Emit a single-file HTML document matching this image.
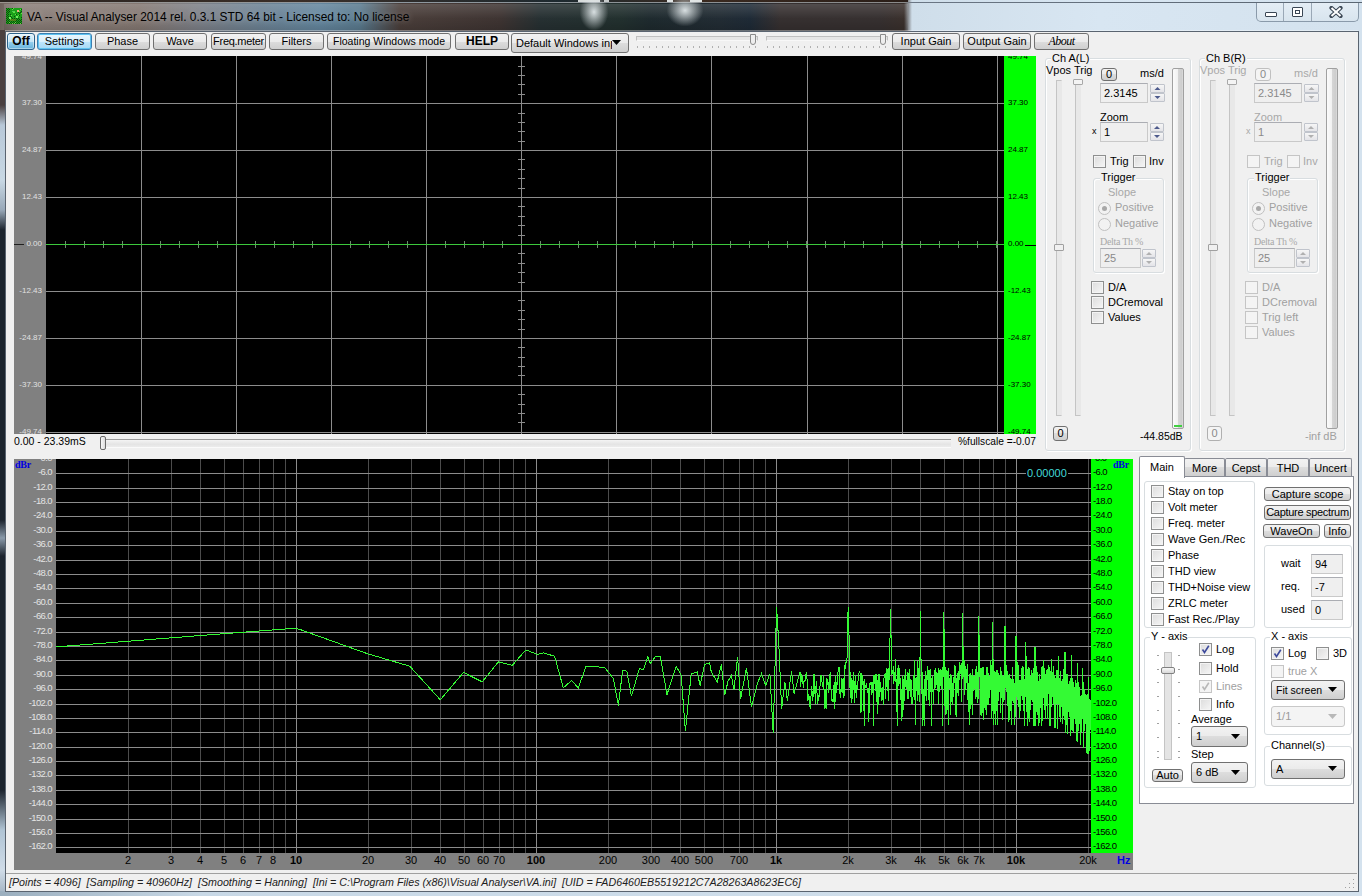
<!DOCTYPE html><html><head><meta charset="utf-8"><style>
*{margin:0;padding:0;box-sizing:content-box}
html,body{width:1362px;height:896px;overflow:hidden;background:#f0f0f0;font-family:"Liberation Sans", sans-serif;font-size:11px;color:#000}
.t{position:absolute;white-space:nowrap;line-height:12px}
.btn{position:absolute;border:1px solid #707070;border-radius:3px;background:linear-gradient(#f2f2f2 0%,#ebebeb 50%,#dddddd 50%,#cfcfcf 100%);text-align:center;white-space:nowrap;overflow:hidden}
.btnd{position:absolute;border:1px solid #adb2b5;border-radius:3px;background:#f4f4f4;text-align:center;white-space:nowrap;overflow:hidden;color:#8a8a8a}
.grp{position:absolute;border:1px solid #d8dde0;border-radius:3px;box-shadow:inset 1px 1px 0 #fff,1px 1px 0 #fff}
.glab{background:#f0f0f0;padding:0 1px}
.cb{position:absolute;width:11px;height:11px;border:1px solid #8e8f8f;background:linear-gradient(135deg,#dcdcdc,#f6f6f6);box-shadow:inset 0 0 0 1px #f4f4f4}
.cb.dis{border-color:#c5c5c5;background:#f4f4f4;box-shadow:none}
.edit{position:absolute;border:1px solid #c9c9c9;border-top-color:#abadb3;background:#efefef;padding-left:3px;box-sizing:border-box;white-space:nowrap}
.spin{position:absolute;border:1px solid #c0c4cc;background:linear-gradient(#f6f6f6,#e4e4e8);border-radius:1px}
.combo{position:absolute;border:1px solid #707070;border-radius:3px;background:linear-gradient(#f2f2f2 0%,#ebebeb 50%,#dddddd 50%,#cfcfcf 100%);padding-left:4px;box-sizing:border-box;white-space:nowrap}
.combo.dis{border-color:#c8c8c8;background:#f4f4f4}
.rad{position:absolute;width:11px;height:11px;border:1px solid #c0c0c0;border-radius:50%;background:#f2f2f2}
.lbl{position:absolute;white-space:nowrap;font-size:8px;line-height:9px;text-align:right}
</style></head><body><div style="position:absolute;left:0;top:0;width:1362px;height:31px;background:linear-gradient(90deg,#6e625c 0px,#8a7e78 20px,#847872 140px,#7c8088 200px,#6c8294 260px,#64869e 320px,#5a7a8e 360px,#4a3e3a 400px,#3e3432 500px,#263032 540px,#22302e 620px,#1e2a2e 650px,#222c34 720px,#1e2a36 750px,#363030 780px,#363030 880px,#3a302c 904px,#cfdeea 912px,#d8e6f2 1100px,#d4e2ee 1362px)"></div><div style="position:absolute;left:0;top:0;width:908px;height:2px;background:linear-gradient(90deg,#2a2420,#3a2e28 300px,#1e2a30 560px,#3a2a20 700px,#2a1e18 905px)"></div><div style="position:absolute;left:578px;top:0;width:22px;height:2px;background:#d8dcdc"></div><div style="position:absolute;left:604px;top:0;width:5px;height:2px;background:#c8cccc"></div><div style="position:absolute;left:667px;top:0;width:6px;height:2px;background:#e0e4e4"></div><div style="position:absolute;left:690px;top:0;width:12px;height:2px;background:#e0e4e4"></div><div style="position:absolute;left:0;top:2px;width:1362px;height:1px;background:linear-gradient(90deg,#9a948e,#8e98a0 400px,#8a8a8a 905px,#6a7684 912px,#5a6672)"></div><div style="position:absolute;left:4px;top:4px;width:904px;height:27px;background:linear-gradient(rgba(255,255,255,0.14),rgba(255,255,255,0.0) 55%,rgba(0,0,0,0.14))"></div><div style="position:absolute;left:574px;top:0px;width:40px;height:30px;background:radial-gradient(ellipse 36% 62% at 50% 40%,rgba(225,232,234,0.95),rgba(200,210,210,0) 100%)"></div><div style="position:absolute;left:662px;top:0px;width:46px;height:26px;background:radial-gradient(ellipse 40% 62% at 50% 40%,rgba(225,232,234,0.95),rgba(200,210,210,0) 100%)"></div><div style="position:absolute;left:0;top:30px;width:5px;height:866px;background:linear-gradient(#4a4040 0px,#4a4040 75px,#b8c8d8 95px,#c8d8e4 150px,#98a8b8 180px,#1c242e 200px,#1c242e 490px,#8a9aaa 508px,#1c242e 526px,#1c242e 760px,#b0c4d4 800px,#d0dce8 840px,#a0b0c0 866px)"></div><div style="position:absolute;left:1358px;top:30px;width:4px;height:866px;background:#d4e2ee"></div><div style="position:absolute;left:0;top:891px;width:1362px;height:5px;background:linear-gradient(90deg,#9aaebe,#c8d8e6 200px,#d4e2ee)"></div><div style="position:absolute;left:5px;top:31px;width:1352px;height:859px;border:1px solid #5a6470;background:#f0f0f0"></div><div style="position:absolute;left:5px;top:30px;width:1353px;height:1px;background:rgba(255,255,255,0.35)"></div><svg style="position:absolute;left:6px;top:8px" width="16" height="16" shape-rendering="crispEdges"><rect width="16" height="16" fill="#1aa01a"/><rect x="0" y="0" width="1" height="1" fill="#0a4a0a"/><rect x="2" y="0" width="1" height="1" fill="#0a4a0a"/><rect x="6" y="0" width="1" height="1" fill="#0a4a0a"/><rect x="7" y="0" width="1" height="1" fill="#60e040"/><rect x="1" y="1" width="1" height="1" fill="#0a4a0a"/><rect x="3" y="1" width="1" height="1" fill="#0a4a0a"/><rect x="6" y="1" width="1" height="1" fill="#60e040"/><rect x="14" y="1" width="1" height="1" fill="#60e040"/><rect x="15" y="1" width="1" height="1" fill="#0a4a0a"/><rect x="0" y="2" width="1" height="1" fill="#0a4a0a"/><rect x="2" y="2" width="1" height="1" fill="#0a4a0a"/><rect x="1" y="3" width="1" height="1" fill="#0a4a0a"/><rect x="3" y="3" width="1" height="1" fill="#0a4a0a"/><rect x="6" y="3" width="1" height="1" fill="#60e040"/><rect x="8" y="3" width="1" height="1" fill="#60e040"/><rect x="11" y="3" width="1" height="1" fill="#0a4a0a"/><rect x="13" y="3" width="1" height="1" fill="#60e040"/><rect x="15" y="3" width="1" height="1" fill="#0a4a0a"/><rect x="0" y="4" width="1" height="1" fill="#0a4a0a"/><rect x="2" y="4" width="1" height="1" fill="#0a4a0a"/><rect x="7" y="4" width="1" height="1" fill="#60e040"/><rect x="8" y="4" width="1" height="1" fill="#60e040"/><rect x="12" y="4" width="1" height="1" fill="#0a4a0a"/><rect x="14" y="4" width="1" height="1" fill="#0a4a0a"/><rect x="1" y="5" width="1" height="1" fill="#0a4a0a"/><rect x="13" y="5" width="1" height="1" fill="#0a4a0a"/><rect x="15" y="5" width="1" height="1" fill="#60e040"/><rect x="0" y="6" width="1" height="1" fill="#0a4a0a"/><rect x="2" y="6" width="1" height="1" fill="#0a4a0a"/><rect x="4" y="6" width="1" height="1" fill="#0a4a0a"/><rect x="9" y="6" width="1" height="1" fill="#60e040"/><rect x="10" y="6" width="1" height="1" fill="#0a4a0a"/><rect x="1" y="7" width="1" height="1" fill="#0a4a0a"/><rect x="5" y="7" width="1" height="1" fill="#60e040"/><rect x="12" y="7" width="1" height="1" fill="#60e040"/><rect x="13" y="7" width="1" height="1" fill="#0a4a0a"/><rect x="0" y="8" width="1" height="1" fill="#0a4a0a"/><rect x="2" y="8" width="1" height="1" fill="#0a4a0a"/><rect x="4" y="8" width="1" height="1" fill="#0a4a0a"/><rect x="8" y="8" width="1" height="1" fill="#0a4a0a"/><rect x="10" y="8" width="1" height="1" fill="#0a4a0a"/><rect x="1" y="9" width="1" height="1" fill="#0a4a0a"/><rect x="3" y="9" width="1" height="1" fill="#0a4a0a"/><rect x="5" y="9" width="1" height="1" fill="#0a4a0a"/><rect x="10" y="9" width="1" height="1" fill="#60e040"/><rect x="15" y="9" width="1" height="1" fill="#0a4a0a"/><rect x="0" y="10" width="1" height="1" fill="#0a4a0a"/><rect x="2" y="10" width="1" height="1" fill="#0a4a0a"/><rect x="6" y="10" width="1" height="1" fill="#0a4a0a"/><rect x="8" y="10" width="1" height="1" fill="#0a4a0a"/><rect x="10" y="10" width="1" height="1" fill="#0a4a0a"/><rect x="12" y="10" width="1" height="1" fill="#0a4a0a"/><rect x="1" y="11" width="1" height="1" fill="#0a4a0a"/><rect x="3" y="11" width="1" height="1" fill="#0a4a0a"/><rect x="4" y="11" width="1" height="1" fill="#60e040"/><rect x="5" y="11" width="1" height="1" fill="#0a4a0a"/><rect x="7" y="11" width="1" height="1" fill="#0a4a0a"/><rect x="9" y="11" width="1" height="1" fill="#0a4a0a"/><rect x="11" y="11" width="1" height="1" fill="#0a4a0a"/><rect x="13" y="11" width="1" height="1" fill="#0a4a0a"/><rect x="15" y="11" width="1" height="1" fill="#0a4a0a"/><rect x="0" y="12" width="1" height="1" fill="#0a4a0a"/><rect x="2" y="12" width="1" height="1" fill="#0a4a0a"/><rect x="4" y="12" width="1" height="1" fill="#0a4a0a"/><rect x="6" y="12" width="1" height="1" fill="#0a4a0a"/><rect x="8" y="12" width="1" height="1" fill="#0a4a0a"/><rect x="10" y="12" width="1" height="1" fill="#0a4a0a"/><rect x="12" y="12" width="1" height="1" fill="#0a4a0a"/><rect x="14" y="12" width="1" height="1" fill="#0a4a0a"/><rect x="1" y="13" width="1" height="1" fill="#0a4a0a"/><rect x="3" y="13" width="1" height="1" fill="#0a4a0a"/><rect x="5" y="13" width="1" height="1" fill="#0a4a0a"/><rect x="7" y="13" width="1" height="1" fill="#0a4a0a"/><rect x="9" y="13" width="1" height="1" fill="#0a4a0a"/><rect x="11" y="13" width="1" height="1" fill="#0a4a0a"/><rect x="13" y="13" width="1" height="1" fill="#0a4a0a"/><rect x="15" y="13" width="1" height="1" fill="#0a4a0a"/><rect x="0" y="14" width="1" height="1" fill="#0a4a0a"/><rect x="2" y="14" width="1" height="1" fill="#0a4a0a"/><rect x="3" y="14" width="1" height="1" fill="#60e040"/><rect x="4" y="14" width="1" height="1" fill="#0a4a0a"/><rect x="6" y="14" width="1" height="1" fill="#0a4a0a"/><rect x="8" y="14" width="1" height="1" fill="#0a4a0a"/><rect x="9" y="14" width="1" height="1" fill="#60e040"/><rect x="10" y="14" width="1" height="1" fill="#0a4a0a"/><rect x="12" y="14" width="1" height="1" fill="#0a4a0a"/><rect x="14" y="14" width="1" height="1" fill="#0a4a0a"/><rect x="1" y="15" width="1" height="1" fill="#0a4a0a"/><rect x="3" y="15" width="1" height="1" fill="#0a4a0a"/><rect x="5" y="15" width="1" height="1" fill="#0a4a0a"/><rect x="6" y="15" width="1" height="1" fill="#60e040"/><rect x="7" y="15" width="1" height="1" fill="#0a4a0a"/><rect x="8" y="15" width="1" height="1" fill="#60e040"/><rect x="9" y="15" width="1" height="1" fill="#0a4a0a"/><rect x="11" y="15" width="1" height="1" fill="#0a4a0a"/><rect x="13" y="15" width="1" height="1" fill="#0a4a0a"/><rect x="14" y="15" width="1" height="1" fill="#60e040"/><rect x="15" y="15" width="1" height="1" fill="#0a4a0a"/><rect x="11" y="2" width="2" height="2" fill="#f0b080"/><rect x="6" y="3" width="3" height="1" fill="#50d050"/><rect x="3" y="9" width="2" height="2" fill="#70f060"/><rect x="10" y="8" width="2" height="2" fill="#70f060"/><rect x="4" y="11" width="6" height="2" fill="#7a8a20" opacity=".6"/></svg><div class="t" style="left:27px;top:10px;font-size:11.9px;line-height:14px;color:#000;text-shadow:0 0 6px rgba(255,255,255,.35)">VA -- Visual Analyser 2014 rel. 0.3.1 STD 64 bit - Licensed to: No license</div><div style="position:absolute;left:1256px;top:3px;width:101px;height:18px;border:1px solid #8a9aaa;border-top:none;border-radius:0 0 5px 5px;background:linear-gradient(#e4edf5,#d8e4ee)"></div><div style="position:absolute;left:1283px;top:3px;width:1px;height:18px;background:#9aa8b6"></div><div style="position:absolute;left:1311px;top:3px;width:1px;height:18px;background:#9aa8b6"></div><div style="position:absolute;left:1265px;top:12px;width:10px;height:3px;border:1px solid #3a4654;background:#fff;border-radius:1px"></div><div style="position:absolute;left:1292px;top:7px;width:9px;height:8px;border:1px solid #3a4654;background:#fff;border-radius:1px"><div style="position:absolute;left:2px;top:2px;width:3px;height:2px;border:1px solid #3a4654"></div></div><svg style="position:absolute;left:1329px;top:6px" width="14" height="12"><path d="M2.5 2 L11.5 10 M11.5 2 L2.5 10" stroke="#3a4654" stroke-width="4.2" stroke-linecap="round"/><path d="M2.5 2 L11.5 10 M11.5 2 L2.5 10" stroke="#fff" stroke-width="2"/></svg><div class="btn" style="left:7px;top:33px;width:26px;height:15px;line-height:15px;border-color:#2c628b;background:linear-gradient(#e5f4fc 0%,#c4e5f6 50%,#98d1ef 50%,#68b3db 100%);box-shadow:inset 0 0 0 1px rgba(255,255,255,.4)"><span style="font-weight:bold;font-size:12px">Off</span></div><div class="btn" style="left:37px;top:33px;width:53px;height:15px;line-height:15px;border-color:#3c7fb1;background:linear-gradient(#eaf6fd 0%,#d9f0fc 50%,#bee6fd 50%,#a7d9f5 100%);box-shadow:inset 0 0 0 1px #5ec2f0"><span>Settings</span></div><div class="btn" style="left:95px;top:33px;width:53px;height:15px;line-height:15px;"><span style="">Phase</span></div><div class="btn" style="left:153px;top:33px;width:52px;height:15px;line-height:15px;"><span style="">Wave</span></div><div class="btn" style="left:211px;top:33px;width:53px;height:15px;line-height:15px;"><span style="letter-spacing:-0.3px">Freq.meter</span></div><div class="btn" style="left:269px;top:33px;width:53px;height:15px;line-height:15px;"><span style="">Filters</span></div><div class="btn" style="left:327px;top:33px;width:122px;height:15px;line-height:15px;"><span style="font-size:10.5px">Floating Windows mode</span></div><div class="btn" style="left:455px;top:33px;width:52px;height:15px;line-height:15px;"><span style="font-weight:bold;font-size:12px">HELP</span></div><div class="combo" style="left:511px;top:33px;width:118px;height:20px;line-height:18px;color:#000"><div style="position:absolute;left:4px;top:0;width:96px;overflow:hidden;white-space:nowrap">Default Windows inp</div><svg width="9" height="5" style="position:absolute;right:7px;top:6px"><path d="M0 0 L9 0 L4.5 5Z" fill="#000"/></svg></div><div style="position:absolute;left:636px;top:36px;width:120px;height:3px;border:1px solid #c0c0c0;border-bottom-color:#f8f8f8;background:#e6e6e6"></div><div style="position:absolute;left:637px;top:46px;width:120px;height:3px"><div style="position:absolute;left:0px;top:0;width:1px;height:2px;background:#b0b0b0"></div><div style="position:absolute;left:6px;top:0;width:1px;height:2px;background:#b0b0b0"></div><div style="position:absolute;left:12px;top:0;width:1px;height:2px;background:#b0b0b0"></div><div style="position:absolute;left:19px;top:0;width:1px;height:2px;background:#b0b0b0"></div><div style="position:absolute;left:25px;top:0;width:1px;height:2px;background:#b0b0b0"></div><div style="position:absolute;left:31px;top:0;width:1px;height:2px;background:#b0b0b0"></div><div style="position:absolute;left:37px;top:0;width:1px;height:2px;background:#b0b0b0"></div><div style="position:absolute;left:43px;top:0;width:1px;height:2px;background:#b0b0b0"></div><div style="position:absolute;left:50px;top:0;width:1px;height:2px;background:#b0b0b0"></div><div style="position:absolute;left:56px;top:0;width:1px;height:2px;background:#b0b0b0"></div><div style="position:absolute;left:62px;top:0;width:1px;height:2px;background:#b0b0b0"></div><div style="position:absolute;left:68px;top:0;width:1px;height:2px;background:#b0b0b0"></div><div style="position:absolute;left:75px;top:0;width:1px;height:2px;background:#b0b0b0"></div><div style="position:absolute;left:81px;top:0;width:1px;height:2px;background:#b0b0b0"></div><div style="position:absolute;left:87px;top:0;width:1px;height:2px;background:#b0b0b0"></div><div style="position:absolute;left:93px;top:0;width:1px;height:2px;background:#b0b0b0"></div><div style="position:absolute;left:99px;top:0;width:1px;height:2px;background:#b0b0b0"></div><div style="position:absolute;left:106px;top:0;width:1px;height:2px;background:#b0b0b0"></div><div style="position:absolute;left:112px;top:0;width:1px;height:2px;background:#b0b0b0"></div><div style="position:absolute;left:118px;top:0;width:1px;height:2px;background:#b0b0b0"></div></div><div style="position:absolute;left:750px;top:34px;width:4px;height:9px;border:1px solid #8a8a8a;border-radius:0 0 3px 3px;background:#eee"></div><div style="position:absolute;left:766px;top:36px;width:120px;height:3px;border:1px solid #c0c0c0;border-bottom-color:#f8f8f8;background:#e6e6e6"></div><div style="position:absolute;left:767px;top:46px;width:120px;height:3px"><div style="position:absolute;left:0px;top:0;width:1px;height:2px;background:#b0b0b0"></div><div style="position:absolute;left:6px;top:0;width:1px;height:2px;background:#b0b0b0"></div><div style="position:absolute;left:12px;top:0;width:1px;height:2px;background:#b0b0b0"></div><div style="position:absolute;left:19px;top:0;width:1px;height:2px;background:#b0b0b0"></div><div style="position:absolute;left:25px;top:0;width:1px;height:2px;background:#b0b0b0"></div><div style="position:absolute;left:31px;top:0;width:1px;height:2px;background:#b0b0b0"></div><div style="position:absolute;left:37px;top:0;width:1px;height:2px;background:#b0b0b0"></div><div style="position:absolute;left:43px;top:0;width:1px;height:2px;background:#b0b0b0"></div><div style="position:absolute;left:50px;top:0;width:1px;height:2px;background:#b0b0b0"></div><div style="position:absolute;left:56px;top:0;width:1px;height:2px;background:#b0b0b0"></div><div style="position:absolute;left:62px;top:0;width:1px;height:2px;background:#b0b0b0"></div><div style="position:absolute;left:68px;top:0;width:1px;height:2px;background:#b0b0b0"></div><div style="position:absolute;left:75px;top:0;width:1px;height:2px;background:#b0b0b0"></div><div style="position:absolute;left:81px;top:0;width:1px;height:2px;background:#b0b0b0"></div><div style="position:absolute;left:87px;top:0;width:1px;height:2px;background:#b0b0b0"></div><div style="position:absolute;left:93px;top:0;width:1px;height:2px;background:#b0b0b0"></div><div style="position:absolute;left:99px;top:0;width:1px;height:2px;background:#b0b0b0"></div><div style="position:absolute;left:106px;top:0;width:1px;height:2px;background:#b0b0b0"></div><div style="position:absolute;left:112px;top:0;width:1px;height:2px;background:#b0b0b0"></div><div style="position:absolute;left:118px;top:0;width:1px;height:2px;background:#b0b0b0"></div></div><div style="position:absolute;left:880px;top:34px;width:4px;height:9px;border:1px solid #8a8a8a;border-radius:0 0 3px 3px;background:#eee"></div><div class="btn" style="left:892px;top:33px;width:66px;height:15px;line-height:15px;"><span style="">Input Gain</span></div><div class="btn" style="left:963px;top:33px;width:66px;height:15px;line-height:15px;"><span style="">Output Gain</span></div><div class="btn" style="left:1034px;top:33px;width:53px;height:15px;line-height:15px;"><span style=""><i style="font-family:&quot;Liberation Serif&quot;,serif;font-size:12px;letter-spacing:-0.5px">About</i></span></div><div style="position:absolute;left:14px;top:56px;width:32px;height:378px;background:#808080"></div><div style="position:absolute;left:46px;top:56px;width:958px;height:378px;background:#000"></div><div style="position:absolute;left:1004px;top:56px;width:32px;height:378px;background:#00ff00"></div><svg style="position:absolute;left:46px;top:56px" width="958" height="378" shape-rendering="crispEdges"><rect x="95" y="0" width="1" height="378" fill="#8c8c8c"/><rect x="190" y="0" width="1" height="378" fill="#8c8c8c"/><rect x="285" y="0" width="1" height="378" fill="#8c8c8c"/><rect x="380" y="0" width="1" height="378" fill="#8c8c8c"/><rect x="475" y="0" width="1" height="378" fill="#8c8c8c"/><rect x="570" y="0" width="1" height="378" fill="#8c8c8c"/><rect x="665" y="0" width="1" height="378" fill="#8c8c8c"/><rect x="761" y="0" width="1" height="378" fill="#8c8c8c"/><rect x="856" y="0" width="1" height="378" fill="#8c8c8c"/><rect x="951" y="0" width="1" height="378" fill="#8c8c8c"/><rect x="0" y="47" width="958" height="1" fill="#8c8c8c"/><rect x="0" y="94" width="958" height="1" fill="#8c8c8c"/><rect x="0" y="141" width="958" height="1" fill="#8c8c8c"/><rect x="0" y="188" width="958" height="1" fill="#8c8c8c"/><rect x="0" y="235" width="958" height="1" fill="#8c8c8c"/><rect x="0" y="282" width="958" height="1" fill="#8c8c8c"/><rect x="0" y="329" width="958" height="1" fill="#8c8c8c"/><rect x="0" y="376" width="958" height="1" fill="#8c8c8c"/><rect x="472" y="10" width="7" height="1" fill="#8c8c8c"/><rect x="472" y="19" width="7" height="1" fill="#8c8c8c"/><rect x="472" y="28" width="7" height="1" fill="#8c8c8c"/><rect x="472" y="38" width="7" height="1" fill="#8c8c8c"/><rect x="472" y="47" width="7" height="1" fill="#8c8c8c"/><rect x="472" y="57" width="7" height="1" fill="#8c8c8c"/><rect x="472" y="66" width="7" height="1" fill="#8c8c8c"/><rect x="472" y="75" width="7" height="1" fill="#8c8c8c"/><rect x="472" y="85" width="7" height="1" fill="#8c8c8c"/><rect x="472" y="94" width="7" height="1" fill="#8c8c8c"/><rect x="472" y="103" width="7" height="1" fill="#8c8c8c"/><rect x="472" y="113" width="7" height="1" fill="#8c8c8c"/><rect x="472" y="122" width="7" height="1" fill="#8c8c8c"/><rect x="472" y="132" width="7" height="1" fill="#8c8c8c"/><rect x="472" y="141" width="7" height="1" fill="#8c8c8c"/><rect x="472" y="150" width="7" height="1" fill="#8c8c8c"/><rect x="472" y="160" width="7" height="1" fill="#8c8c8c"/><rect x="472" y="169" width="7" height="1" fill="#8c8c8c"/><rect x="472" y="179" width="7" height="1" fill="#8c8c8c"/><rect x="472" y="197" width="7" height="1" fill="#8c8c8c"/><rect x="472" y="207" width="7" height="1" fill="#8c8c8c"/><rect x="472" y="216" width="7" height="1" fill="#8c8c8c"/><rect x="472" y="226" width="7" height="1" fill="#8c8c8c"/><rect x="472" y="235" width="7" height="1" fill="#8c8c8c"/><rect x="472" y="244" width="7" height="1" fill="#8c8c8c"/><rect x="472" y="254" width="7" height="1" fill="#8c8c8c"/><rect x="472" y="263" width="7" height="1" fill="#8c8c8c"/><rect x="472" y="273" width="7" height="1" fill="#8c8c8c"/><rect x="472" y="282" width="7" height="1" fill="#8c8c8c"/><rect x="472" y="291" width="7" height="1" fill="#8c8c8c"/><rect x="472" y="301" width="7" height="1" fill="#8c8c8c"/><rect x="472" y="310" width="7" height="1" fill="#8c8c8c"/><rect x="472" y="319" width="7" height="1" fill="#8c8c8c"/><rect x="472" y="329" width="7" height="1" fill="#8c8c8c"/><rect x="472" y="338" width="7" height="1" fill="#8c8c8c"/><rect x="472" y="348" width="7" height="1" fill="#8c8c8c"/><rect x="472" y="357" width="7" height="1" fill="#8c8c8c"/><rect x="472" y="366" width="7" height="1" fill="#8c8c8c"/><rect x="472" y="376" width="7" height="1" fill="#8c8c8c"/><rect x="19" y="185" width="1" height="7" fill="#6c8c6c"/><rect x="38" y="185" width="1" height="7" fill="#6c8c6c"/><rect x="57" y="185" width="1" height="7" fill="#6c8c6c"/><rect x="76" y="185" width="1" height="7" fill="#6c8c6c"/><rect x="95" y="185" width="1" height="7" fill="#6c8c6c"/><rect x="114" y="185" width="1" height="7" fill="#6c8c6c"/><rect x="133" y="185" width="1" height="7" fill="#6c8c6c"/><rect x="152" y="185" width="1" height="7" fill="#6c8c6c"/><rect x="171" y="185" width="1" height="7" fill="#6c8c6c"/><rect x="190" y="185" width="1" height="7" fill="#6c8c6c"/><rect x="209" y="185" width="1" height="7" fill="#6c8c6c"/><rect x="228" y="185" width="1" height="7" fill="#6c8c6c"/><rect x="247" y="185" width="1" height="7" fill="#6c8c6c"/><rect x="266" y="185" width="1" height="7" fill="#6c8c6c"/><rect x="285" y="185" width="1" height="7" fill="#6c8c6c"/><rect x="304" y="185" width="1" height="7" fill="#6c8c6c"/><rect x="323" y="185" width="1" height="7" fill="#6c8c6c"/><rect x="342" y="185" width="1" height="7" fill="#6c8c6c"/><rect x="361" y="185" width="1" height="7" fill="#6c8c6c"/><rect x="380" y="185" width="1" height="7" fill="#6c8c6c"/><rect x="399" y="185" width="1" height="7" fill="#6c8c6c"/><rect x="418" y="185" width="1" height="7" fill="#6c8c6c"/><rect x="437" y="185" width="1" height="7" fill="#6c8c6c"/><rect x="456" y="185" width="1" height="7" fill="#6c8c6c"/><rect x="494" y="185" width="1" height="7" fill="#6c8c6c"/><rect x="513" y="185" width="1" height="7" fill="#6c8c6c"/><rect x="532" y="185" width="1" height="7" fill="#6c8c6c"/><rect x="551" y="185" width="1" height="7" fill="#6c8c6c"/><rect x="570" y="185" width="1" height="7" fill="#6c8c6c"/><rect x="589" y="185" width="1" height="7" fill="#6c8c6c"/><rect x="608" y="185" width="1" height="7" fill="#6c8c6c"/><rect x="627" y="185" width="1" height="7" fill="#6c8c6c"/><rect x="646" y="185" width="1" height="7" fill="#6c8c6c"/><rect x="665" y="185" width="1" height="7" fill="#6c8c6c"/><rect x="684" y="185" width="1" height="7" fill="#6c8c6c"/><rect x="703" y="185" width="1" height="7" fill="#6c8c6c"/><rect x="722" y="185" width="1" height="7" fill="#6c8c6c"/><rect x="741" y="185" width="1" height="7" fill="#6c8c6c"/><rect x="760" y="185" width="1" height="7" fill="#6c8c6c"/><rect x="779" y="185" width="1" height="7" fill="#6c8c6c"/><rect x="798" y="185" width="1" height="7" fill="#6c8c6c"/><rect x="817" y="185" width="1" height="7" fill="#6c8c6c"/><rect x="836" y="185" width="1" height="7" fill="#6c8c6c"/><rect x="855" y="185" width="1" height="7" fill="#6c8c6c"/><rect x="874" y="185" width="1" height="7" fill="#6c8c6c"/><rect x="893" y="185" width="1" height="7" fill="#6c8c6c"/><rect x="912" y="185" width="1" height="7" fill="#6c8c6c"/><rect x="931" y="185" width="1" height="7" fill="#6c8c6c"/><rect x="950" y="185" width="1" height="7" fill="#6c8c6c"/><rect x="0" y="188" width="958" height="1" fill="#3cc83c"/></svg><div style="position:absolute;left:14px;top:56px;width:32px;height:378px;overflow:hidden"><div class="lbl" style="left:0px;top:-4px;width:28px;color:#e0e0e0">49.74</div><div class="lbl" style="left:0px;top:42px;width:28px;color:#e0e0e0">37.30</div><div class="lbl" style="left:0px;top:89px;width:28px;color:#e0e0e0">24.87</div><div class="lbl" style="left:0px;top:136px;width:28px;color:#e0e0e0">12.43</div><div class="lbl" style="left:0px;top:183px;width:28px;color:#e0e0e0">0.00</div><div class="lbl" style="left:0px;top:230px;width:28px;color:#e0e0e0">-12.43</div><div class="lbl" style="left:0px;top:277px;width:28px;color:#e0e0e0">-24.87</div><div class="lbl" style="left:0px;top:324px;width:28px;color:#e0e0e0">-37.30</div><div class="lbl" style="left:0px;top:371px;width:28px;color:#e0e0e0">-49.74</div></div><div style="position:absolute;left:1004px;top:56px;width:32px;height:378px;overflow:hidden"><div class="lbl" style="left:4px;top:-4px;width:28px;text-align:left;color:#000">49.74</div><div class="lbl" style="left:4px;top:42px;width:28px;text-align:left;color:#000">37.30</div><div class="lbl" style="left:4px;top:89px;width:28px;text-align:left;color:#000">24.87</div><div class="lbl" style="left:4px;top:136px;width:28px;text-align:left;color:#000">12.43</div><div class="lbl" style="left:4px;top:183px;width:28px;text-align:left;color:#000">0.00</div><div class="lbl" style="left:4px;top:230px;width:28px;text-align:left;color:#000">-12.43</div><div class="lbl" style="left:4px;top:277px;width:28px;text-align:left;color:#000">-24.87</div><div class="lbl" style="left:4px;top:324px;width:28px;text-align:left;color:#000">-37.30</div><div class="lbl" style="left:4px;top:371px;width:28px;text-align:left;color:#000">-49.74</div></div><div style="position:absolute;left:14px;top:244px;width:10px;height:1px;background:#202020"></div><div style="position:absolute;left:1025px;top:245px;width:11px;height:1px;background:#000"></div><div class="t" style="left:14px;top:435px;font-size:10.5px">0.00 - 23.39mS</div><div style="position:absolute;left:100px;top:439px;width:851px;height:7px;border-top:1px solid #9a9a9a;background:linear-gradient(#f4f4f4,#e4e4e4 60%,#ececec);border-bottom:1px solid #fafafa"></div><div style="position:absolute;left:100px;top:436px;width:4px;height:12px;border:1px solid #6a6a6a;border-radius:2px;background:linear-gradient(90deg,#f8f8f8,#dcdcdc)"></div><div class="t" style="left:958px;top:436px;font-size:10.2px">%fullscale =-0.07</div><div class="grp" style="left:1045px;top:58px;width:144px;height:391px"></div><div class="t glab" style="left:1051px;top:52px">Ch A(L)</div><div class="t" style="left:1046px;top:64px;">Vpos Trig</div><div style="position:absolute;left:1056px;top:80px;width:4px;height:334px;border:1px solid #c4c4c4;border-right-color:#e8e8e8;background:#e8e8e8"></div><div style="position:absolute;left:1075px;top:80px;width:4px;height:334px;border:1px solid #c4c4c4;border-right-color:#e8e8e8;background:#e8e8e8"></div><div style="position:absolute;left:1073px;top:79px;width:8px;height:4px;border:1px solid #a8a8a8;border-radius:1px;background:#f4f4f4"></div><div style="position:absolute;left:1054px;top:244px;width:8px;height:5px;border:1px solid #a0a0a0;border-radius:1px;background:#f0f0f0"></div><div class="btn" style="left:1101px;top:68px;width:14px;height:11px;line-height:11px;"><span style="">0</span></div><div class="t" style="left:1140px;top:67px;">ms/d</div><div class="edit" style="left:1100px;top:83px;width:48px;height:20px;line-height:18px;color:#000;">2.3145</div><div class="spin" style="left:1150px;top:84px;width:13px;height:7px"><svg width="13" height="7" style="position:absolute;left:0;top:0"><path transform="translate(1.5,0.0)" d="M2 5 L5 2 L8 5Z" fill="#4d5a8c"/></svg></div><div class="spin" style="left:1150px;top:93px;width:13px;height:7px"><svg width="13" height="7" style="position:absolute;left:0;top:0"><path transform="translate(1.5,0.0)" d="M2 2 L5 5 L8 2Z" fill="#4d5a8c"/></svg></div><div class="t" style="left:1100px;top:111px;">Zoom</div><div class="t" style="left:1092px;top:125px;font-size:9px">x</div><div class="edit" style="left:1100px;top:122px;width:48px;height:20px;line-height:18px;color:#000;">1</div><div class="spin" style="left:1150px;top:123px;width:12px;height:7px"><svg width="12" height="7" style="position:absolute;left:0;top:0"><path transform="translate(1.0,0.0)" d="M2 5 L5 2 L8 5Z" fill="#4d5a8c"/></svg></div><div class="spin" style="left:1150px;top:132px;width:12px;height:7px"><svg width="12" height="7" style="position:absolute;left:0;top:0"><path transform="translate(1.0,0.0)" d="M2 2 L5 5 L8 2Z" fill="#4d5a8c"/></svg></div><div class="cb" style="left:1093px;top:155px"></div><div class="t" style="left:1110px;top:155px;">Trig</div><div class="cb" style="left:1133px;top:155px"></div><div class="t" style="left:1149px;top:155px;">Inv</div><div class="grp" style="left:1093px;top:178px;width:69px;height:93px"></div><div class="t glab" style="left:1100px;top:171px">Trigger</div><div class="t" style="left:1108px;top:186px;color:#a8a8a8">Slope</div><div class="rad" style="left:1098px;top:202px"><div style="position:absolute;left:3px;top:3px;width:5px;height:5px;border-radius:50%;background:#a8a8a8"></div></div><div class="t" style="left:1115px;top:201px;color:#a0a0a0">Positive</div><div class="rad" style="left:1098px;top:218px"></div><div class="t" style="left:1115px;top:217px;color:#a0a0a0">Negative</div><div class="t" style="left:1100px;top:236px;color:#a8a8a8;font-family:&quot;Liberation Serif&quot;,serif;font-size:10px;letter-spacing:-0.3px">Delta Th %</div><div class="edit" style="left:1100px;top:248px;width:41px;height:20px;line-height:18px;color:#8a8a8a;">25</div><div class="spin" style="left:1142px;top:249px;width:12px;height:7px"><svg width="12" height="7" style="position:absolute;left:0;top:0"><path transform="translate(1.0,0.0)" d="M2 5 L5 2 L8 5Z" fill="#b0b0b0"/></svg></div><div class="spin" style="left:1142px;top:258px;width:12px;height:7px"><svg width="12" height="7" style="position:absolute;left:0;top:0"><path transform="translate(1.0,0.0)" d="M2 2 L5 5 L8 2Z" fill="#b0b0b0"/></svg></div><div class="cb" style="left:1091px;top:281px"></div><div class="t" style="left:1108px;top:281px;">D/A</div><div class="cb" style="left:1091px;top:296px"></div><div class="t" style="left:1108px;top:296px;">DCremoval</div><div class="cb" style="left:1091px;top:311px"></div><div class="t" style="left:1108px;top:311px;">Values</div><div style="position:absolute;left:1172px;top:68px;width:10px;height:359px;border:1px solid #a0a0a0;border-radius:2px;background:linear-gradient(90deg,#fbfbfb,#f2f2f2 45%,#d6d6d6 50%,#cecece 85%,#dcdcdc)"></div><div class="btn" style="left:1053px;top:426px;width:13px;height:13px;line-height:13px;"><span style="">0</span></div><div style="position:absolute;left:1174px;top:425px;width:8px;height:2px;background:#40d040"></div><div class="t" style="left:1140px;top:430px;font-size:10.5px">-44.85dB</div><div class="grp" style="left:1199px;top:58px;width:144px;height:391px"></div><div class="t glab" style="left:1205px;top:52px">Ch B(R)</div><div class="t" style="left:1200px;top:64px;color:#a8a8a8;">Vpos Trig</div><div style="position:absolute;left:1210px;top:80px;width:4px;height:334px;border:1px solid #c4c4c4;border-right-color:#e8e8e8;background:#e8e8e8"></div><div style="position:absolute;left:1229px;top:80px;width:4px;height:334px;border:1px solid #c4c4c4;border-right-color:#e8e8e8;background:#e8e8e8"></div><div style="position:absolute;left:1227px;top:79px;width:8px;height:4px;border:1px solid #a8a8a8;border-radius:1px;background:#f4f4f4"></div><div style="position:absolute;left:1208px;top:244px;width:8px;height:5px;border:1px solid #a0a0a0;border-radius:1px;background:#f0f0f0"></div><div class="btnd" style="left:1255px;top:68px;width:14px;height:11px;line-height:11px;border-color:#c0c0c0">0</div><div class="t" style="left:1294px;top:67px;color:#a8a8a8;">ms/d</div><div class="edit" style="left:1254px;top:83px;width:48px;height:20px;line-height:18px;color:#8a8a8a;">2.3145</div><div class="spin" style="left:1304px;top:84px;width:13px;height:7px"><svg width="13" height="7" style="position:absolute;left:0;top:0"><path transform="translate(1.5,0.0)" d="M2 5 L5 2 L8 5Z" fill="#b0b0b0"/></svg></div><div class="spin" style="left:1304px;top:93px;width:13px;height:7px"><svg width="13" height="7" style="position:absolute;left:0;top:0"><path transform="translate(1.5,0.0)" d="M2 2 L5 5 L8 2Z" fill="#b0b0b0"/></svg></div><div class="t" style="left:1254px;top:111px;color:#a8a8a8;">Zoom</div><div class="t" style="left:1246px;top:125px;color:#a8a8a8;font-size:9px">x</div><div class="edit" style="left:1254px;top:122px;width:48px;height:20px;line-height:18px;color:#8a8a8a;">1</div><div class="spin" style="left:1304px;top:123px;width:12px;height:7px"><svg width="12" height="7" style="position:absolute;left:0;top:0"><path transform="translate(1.0,0.0)" d="M2 5 L5 2 L8 5Z" fill="#b0b0b0"/></svg></div><div class="spin" style="left:1304px;top:132px;width:12px;height:7px"><svg width="12" height="7" style="position:absolute;left:0;top:0"><path transform="translate(1.0,0.0)" d="M2 2 L5 5 L8 2Z" fill="#b0b0b0"/></svg></div><div class="cb dis" style="left:1247px;top:155px"></div><div class="t" style="left:1264px;top:155px;color:#a8a8a8;">Trig</div><div class="cb dis" style="left:1287px;top:155px"></div><div class="t" style="left:1303px;top:155px;color:#a8a8a8;">Inv</div><div class="grp" style="left:1247px;top:178px;width:69px;height:93px"></div><div class="t glab" style="left:1254px;top:171px">Trigger</div><div class="t" style="left:1262px;top:186px;color:#a8a8a8">Slope</div><div class="rad" style="left:1252px;top:202px"><div style="position:absolute;left:3px;top:3px;width:5px;height:5px;border-radius:50%;background:#a8a8a8"></div></div><div class="t" style="left:1269px;top:201px;color:#a0a0a0">Positive</div><div class="rad" style="left:1252px;top:218px"></div><div class="t" style="left:1269px;top:217px;color:#a0a0a0">Negative</div><div class="t" style="left:1254px;top:236px;color:#a8a8a8;font-family:&quot;Liberation Serif&quot;,serif;font-size:10px;letter-spacing:-0.3px">Delta Th %</div><div class="edit" style="left:1254px;top:248px;width:41px;height:20px;line-height:18px;color:#8a8a8a;">25</div><div class="spin" style="left:1296px;top:249px;width:12px;height:7px"><svg width="12" height="7" style="position:absolute;left:0;top:0"><path transform="translate(1.0,0.0)" d="M2 5 L5 2 L8 5Z" fill="#b0b0b0"/></svg></div><div class="spin" style="left:1296px;top:258px;width:12px;height:7px"><svg width="12" height="7" style="position:absolute;left:0;top:0"><path transform="translate(1.0,0.0)" d="M2 2 L5 5 L8 2Z" fill="#b0b0b0"/></svg></div><div class="cb dis" style="left:1245px;top:281px"></div><div class="t" style="left:1262px;top:281px;color:#a0a0a0;">D/A</div><div class="cb dis" style="left:1245px;top:296px"></div><div class="t" style="left:1262px;top:296px;color:#a0a0a0;">DCremoval</div><div class="cb dis" style="left:1245px;top:311px"></div><div class="t" style="left:1262px;top:311px;color:#a0a0a0;">Trig left</div><div class="cb dis" style="left:1245px;top:326px"></div><div class="t" style="left:1262px;top:326px;color:#a0a0a0;">Values</div><div style="position:absolute;left:1326px;top:68px;width:10px;height:359px;border:1px solid #a0a0a0;border-radius:2px;background:linear-gradient(90deg,#fbfbfb,#f2f2f2 45%,#d6d6d6 50%,#cecece 85%,#dcdcdc)"></div><div class="btnd" style="left:1207px;top:426px;width:13px;height:13px;line-height:13px;border-color:#b0b0b0">0</div><div class="t" style="left:1305px;top:430px;color:#a0a0a0">-inf dB</div><div style="position:absolute;left:14px;top:459px;width:42px;height:411px;background:#808080"></div><div style="position:absolute;left:56px;top:853px;width:1077px;height:17px;background:#808080"></div><div style="position:absolute;left:56px;top:459px;width:1035px;height:394px;background:#000"></div><div style="position:absolute;left:1091px;top:459px;width:42px;height:394px;background:#00ff00"></div><svg style="position:absolute;left:56px;top:459px" width="1035" height="394" shape-rendering="crispEdges"><rect x="72" y="0" width="1" height="394" fill="#4c4c4c"/><rect x="115" y="0" width="1" height="394" fill="#4c4c4c"/><rect x="144" y="0" width="1" height="394" fill="#4c4c4c"/><rect x="168" y="0" width="1" height="394" fill="#4c4c4c"/><rect x="187" y="0" width="1" height="394" fill="#4c4c4c"/><rect x="203" y="0" width="1" height="394" fill="#4c4c4c"/><rect x="217" y="0" width="1" height="394" fill="#4c4c4c"/><rect x="229" y="0" width="1" height="394" fill="#4c4c4c"/><rect x="240" y="0" width="1" height="394" fill="#8c8c8c"/><rect x="312" y="0" width="1" height="394" fill="#4c4c4c"/><rect x="355" y="0" width="1" height="394" fill="#4c4c4c"/><rect x="384" y="0" width="1" height="394" fill="#4c4c4c"/><rect x="408" y="0" width="1" height="394" fill="#4c4c4c"/><rect x="427" y="0" width="1" height="394" fill="#4c4c4c"/><rect x="443" y="0" width="1" height="394" fill="#4c4c4c"/><rect x="457" y="0" width="1" height="394" fill="#4c4c4c"/><rect x="469" y="0" width="1" height="394" fill="#4c4c4c"/><rect x="480" y="0" width="1" height="394" fill="#8c8c8c"/><rect x="552" y="0" width="1" height="394" fill="#4c4c4c"/><rect x="595" y="0" width="1" height="394" fill="#4c4c4c"/><rect x="624" y="0" width="1" height="394" fill="#4c4c4c"/><rect x="648" y="0" width="1" height="394" fill="#4c4c4c"/><rect x="667" y="0" width="1" height="394" fill="#4c4c4c"/><rect x="683" y="0" width="1" height="394" fill="#4c4c4c"/><rect x="697" y="0" width="1" height="394" fill="#4c4c4c"/><rect x="709" y="0" width="1" height="394" fill="#4c4c4c"/><rect x="720" y="0" width="1" height="394" fill="#8c8c8c"/><rect x="792" y="0" width="1" height="394" fill="#4c4c4c"/><rect x="835" y="0" width="1" height="394" fill="#4c4c4c"/><rect x="864" y="0" width="1" height="394" fill="#4c4c4c"/><rect x="888" y="0" width="1" height="394" fill="#4c4c4c"/><rect x="907" y="0" width="1" height="394" fill="#4c4c4c"/><rect x="923" y="0" width="1" height="394" fill="#4c4c4c"/><rect x="937" y="0" width="1" height="394" fill="#4c4c4c"/><rect x="949" y="0" width="1" height="394" fill="#4c4c4c"/><rect x="960" y="0" width="1" height="394" fill="#8c8c8c"/><rect x="1032" y="0" width="1" height="394" fill="#4c4c4c"/><rect x="1032" y="0" width="1" height="394" fill="#4c4c4c"/><rect x="0" y="14" width="1035" height="1" fill="#8c8c8c"/><rect x="0" y="29" width="1035" height="1" fill="#8c8c8c"/><rect x="0" y="43" width="1035" height="1" fill="#8c8c8c"/><rect x="0" y="57" width="1035" height="1" fill="#8c8c8c"/><rect x="0" y="72" width="1035" height="1" fill="#8c8c8c"/><rect x="0" y="86" width="1035" height="1" fill="#8c8c8c"/><rect x="0" y="101" width="1035" height="1" fill="#8c8c8c"/><rect x="0" y="115" width="1035" height="1" fill="#8c8c8c"/><rect x="0" y="129" width="1035" height="1" fill="#8c8c8c"/><rect x="0" y="144" width="1035" height="1" fill="#8c8c8c"/><rect x="0" y="158" width="1035" height="1" fill="#8c8c8c"/><rect x="0" y="173" width="1035" height="1" fill="#8c8c8c"/><rect x="0" y="187" width="1035" height="1" fill="#8c8c8c"/><rect x="0" y="201" width="1035" height="1" fill="#8c8c8c"/><rect x="0" y="216" width="1035" height="1" fill="#8c8c8c"/><rect x="0" y="230" width="1035" height="1" fill="#8c8c8c"/><rect x="0" y="245" width="1035" height="1" fill="#8c8c8c"/><rect x="0" y="259" width="1035" height="1" fill="#8c8c8c"/><rect x="0" y="273" width="1035" height="1" fill="#8c8c8c"/><rect x="0" y="288" width="1035" height="1" fill="#8c8c8c"/><rect x="0" y="302" width="1035" height="1" fill="#8c8c8c"/><rect x="0" y="316" width="1035" height="1" fill="#8c8c8c"/><rect x="0" y="331" width="1035" height="1" fill="#8c8c8c"/><rect x="0" y="345" width="1035" height="1" fill="#8c8c8c"/><rect x="0" y="360" width="1035" height="1" fill="#8c8c8c"/><rect x="0" y="374" width="1035" height="1" fill="#8c8c8c"/><rect x="0" y="388" width="1035" height="1" fill="#8c8c8c"/><path d="M0.2 187.9 L71.2 182.3 L142.2 176.7 L239.7 169.2 L244.0 170.5 L311.4 194.7 L353.8 207.2 L384.3 240.8 L407.5 213.4 L426.2 222.9 L442.4 202.9 L456.2 206.4 L469.9 190.9 L481.1 195.4 L487.4 193.9 L498.6 197.2 L507.3 228.9 L515.6 221.4 L522.3 228.9 L529.8 207.9 L538.5 207.2 L547.3 208.9 L549.0 208.8 L557.4 219.7 L562.4 246.5 L566.6 211.3 L570.8 212.2 L575.5 237.3 L583.3 209.7 L587.5 210.5 L591.7 197.6 L594.2 204.6 L599.2 198.0 L604.3 197.4 L611.0 235.6 L620.2 207.2 L625.2 216.4 L629.4 272.4 L635.2 214.7 L641.1 213.0 L644.1 226.4 L648.6 205.5 L653.6 203.8 L655.3 213.0 L661.2 223.0 L665.3 205.5 L668.7 236.4 L672.0 222.2 L675.4 216.4 L677.9 231.4 L681.6 198.0 L684.6 239.8 L690.4 208.8 L695.5 248.2 L701.3 224.7 L705.5 214.7 L709.7 226.4 L713.9 214.7 L717.2 274.1 L720.6 147.7 L722.7 182.9 L725.6 249.8 L728.9 223.0 L731.4 241.5 L735.6 212.2 L738.1 234.8 L744.0 213.0 L744.1 227.5 L744.9 224.2 L745.7 216.3 L746.5 218.0 L747.3 229.4 L748.1 221.0 L748.9 223.2 L749.7 215.5 L750.5 214.1 L751.3 222.8 L752.0 241.6 L752.8 234.6 L753.6 245.6 L754.3 250.0 L755.1 235.4 L755.8 227.4 L756.5 242.4 L757.3 235.6 L758.0 215.0 L758.7 226.7 L759.4 245.0 L760.2 221.9 L760.9 232.2 L761.6 245.0 L762.3 240.6 L763.0 236.2 L763.6 238.3 L764.3 219.4 L765.0 216.2 L765.7 217.6 L766.3 228.1 L767.0 222.9 L767.7 217.5 L768.3 242.5 L769.0 250.0 L769.6 230.1 L770.3 250.0 L770.9 218.7 L771.6 224.7 L772.2 223.3 L772.8 233.9 L773.5 222.1 L774.1 213.4 L774.7 220.1 L775.3 239.0 L775.9 241.1 L776.5 240.7 L777.1 243.1 L777.7 228.2 L778.3 223.2 L778.9 250.0 L779.5 217.4 L780.1 223.6 L780.7 234.4 L781.3 217.8 L781.8 214.8 L782.4 209.8 L783.0 208.1 L783.6 217.4 L784.1 239.3 L784.7 230.1 L785.2 233.4 L785.8 219.0 L786.4 221.4 L786.9 234.3 L787.4 218.9 L788.0 238.5 L788.5 207.9 L789.1 205.3 L789.6 209.5 L790.1 202.0 L790.7 204.2 L791.2 196.0 L791.7 162.0 L792.2 148.0 L792.8 162.0 L793.3 196.0 L793.8 221.5 L794.3 239.4 L794.8 213.2 L795.3 227.2 L795.8 244.4 L796.3 234.3 L796.8 227.6 L797.3 212.9 L797.8 221.0 L798.3 243.5 L798.8 225.9 L799.3 216.0 L799.8 230.7 L800.3 238.5 L800.8 225.8 L801.2 228.5 L801.7 231.2 L802.2 216.9 L802.7 218.9 L803.1 212.3 L803.6 213.3 L804.1 213.9 L804.5 217.4 L805.0 254.0 L805.4 216.8 L805.9 213.8 L806.4 225.2 L806.8 225.2 L807.3 222.3 L807.7 226.4 L808.2 267.0 L808.6 220.2 L809.1 227.6 L809.5 228.2 L809.9 228.4 L810.4 224.2 L810.8 224.2 L811.3 234.3 L811.7 230.8 L812.1 230.2 L812.5 262.5 L813.0 239.2 L813.4 254.2 L813.8 225.8 L814.2 223.2 L814.7 224.2 L815.1 226.6 L815.5 235.5 L815.9 222.9 L816.3 228.2 L816.7 234.0 L817.2 216.4 L817.6 267.0 L818.0 223.1 L818.4 222.3 L818.8 216.0 L819.2 232.3 L819.6 222.1 L820.0 214.6 L820.4 216.7 L820.8 230.5 L821.2 254.5 L821.6 221.0 L822.0 222.2 L822.4 246.1 L822.8 216.3 L823.1 215.0 L823.5 238.2 L823.9 224.5 L824.3 223.0 L824.7 228.9 L825.1 234.6 L825.4 229.0 L825.8 241.8 L826.2 240.2 L826.6 229.1 L826.9 228.8 L827.3 245.9 L827.7 229.3 L828.1 215.6 L828.4 217.6 L828.8 216.6 L829.2 214.3 L829.5 239.9 L829.9 232.5 L830.3 217.8 L830.6 209.3 L831.0 227.8 L831.3 232.0 L831.7 221.6 L832.0 210.5 L832.4 209.9 L832.8 241.6 L833.1 212.8 L833.5 218.6 L833.8 198.0 L834.2 164.0 L834.5 150.0 L834.9 164.0 L835.2 196.0 L835.5 201.1 L835.9 216.4 L836.2 213.5 L836.6 211.0 L836.9 212.0 L837.3 212.0 L837.6 207.0 L837.9 224.7 L838.3 214.6 L838.6 219.7 L838.9 218.6 L839.3 200.1 L839.6 214.0 L839.9 222.8 L840.3 220.4 L840.6 252.5 L840.9 238.2 L841.2 266.9 L841.6 220.5 L841.9 209.2 L842.2 211.2 L842.5 226.5 L842.9 206.0 L843.2 214.7 L843.5 220.3 L843.8 223.4 L844.1 225.0 L844.4 218.9 L844.8 232.1 L845.1 245.1 L845.4 262.4 L845.7 230.5 L846.0 259.7 L846.3 227.2 L846.6 225.5 L846.9 217.4 L847.2 224.2 L847.6 251.1 L847.9 238.3 L848.2 230.6 L848.5 241.6 L848.8 229.5 L849.1 210.5 L849.4 216.2 L849.7 220.3 L850.0 228.2 L850.3 228.4 L850.6 230.1 L850.9 226.0 L851.2 213.3 L851.5 239.5 L851.8 226.9 L852.1 220.2 L852.3 239.8 L852.6 226.0 L852.9 216.1 L853.2 210.2 L853.5 214.2 L853.8 228.5 L854.1 232.8 L854.4 237.9 L854.7 230.9 L855.0 220.3 L855.2 225.5 L855.5 231.8 L855.8 245.4 L856.1 240.2 L856.4 240.3 L856.6 240.9 L856.9 245.0 L857.2 226.9 L857.5 229.1 L857.8 236.7 L858.0 216.4 L858.3 202.4 L858.6 200.6 L858.9 210.3 L859.1 266.3 L859.4 219.9 L859.7 220.1 L860.0 228.3 L860.2 232.1 L860.5 227.5 L860.8 218.0 L861.1 234.8 L861.3 241.7 L861.6 205.5 L861.9 202.2 L862.1 214.4 L862.4 229.5 L862.7 234.5 L862.9 236.3 L863.2 233.4 L863.4 216.0 L863.7 243.4 L864.0 200.5 L864.2 166.5 L864.5 152.5 L864.8 166.5 L865.0 200.5 L865.3 230.1 L865.5 235.1 L865.8 225.1 L866.0 213.0 L866.3 266.6 L866.6 220.2 L866.8 218.3 L867.1 234.5 L867.3 246.7 L867.6 253.5 L867.8 248.4 L868.1 266.6 L868.3 227.6 L868.6 220.5 L868.8 250.1 L869.1 215.7 L869.3 212.0 L869.6 221.0 L869.8 223.7 L870.1 241.5 L870.3 239.5 L870.6 228.7 L870.8 222.6 L871.1 212.9 L871.3 220.5 L871.5 212.8 L871.8 207.4 L872.0 211.0 L872.3 226.5 L872.5 240.9 L872.8 236.3 L873.0 211.2 L873.2 210.7 L873.5 246.7 L873.7 226.7 L874.0 227.9 L874.2 229.1 L874.4 231.6 L874.7 210.2 L874.9 213.1 L875.1 248.6 L875.4 266.6 L875.6 258.2 L875.8 225.7 L876.1 216.8 L876.3 223.4 L876.5 225.7 L876.8 229.2 L877.0 232.6 L877.2 244.7 L877.5 230.7 L877.7 242.3 L877.9 236.3 L878.2 222.1 L878.4 217.2 L878.6 224.2 L878.8 214.8 L879.1 210.0 L879.3 209.9 L879.5 216.6 L879.7 229.4 L880.0 212.4 L880.2 221.6 L880.4 216.5 L880.6 215.4 L880.9 226.0 L881.1 224.0 L881.3 213.7 L881.5 231.8 L881.7 219.9 L882.0 229.8 L882.2 245.1 L882.4 222.2 L882.6 215.6 L882.8 209.5 L883.1 218.4 L883.3 210.8 L883.5 215.1 L883.7 233.3 L883.9 218.2 L884.1 221.0 L884.4 227.4 L884.6 221.4 L884.8 210.9 L885.0 210.3 L885.2 215.2 L885.4 224.3 L885.6 229.8 L885.9 224.6 L886.1 226.9 L886.3 266.5 L886.5 220.4 L886.7 207.8 L886.9 223.0 L887.1 214.3 L887.3 201.3 L887.5 167.3 L887.8 153.3 L888.0 167.3 L888.2 201.3 L888.4 243.6 L888.6 247.4 L888.8 225.9 L889.0 220.8 L889.2 208.5 L889.4 216.0 L889.6 223.4 L889.8 230.3 L890.0 256.2 L890.2 229.7 L890.4 221.6 L890.6 222.9 L890.8 212.0 L891.0 211.5 L891.2 224.0 L891.4 223.7 L891.6 211.7 L891.8 238.8 L892.0 250.8 L892.2 266.4 L892.4 219.2 L892.6 208.9 L892.8 214.0 L893.0 229.0 L893.2 224.5 L893.4 222.8 L893.6 230.4 L893.8 219.1 L894.0 226.8 L894.2 234.3 L894.4 255.6 L894.6 218.2 L894.8 215.0 L895.0 243.7 L895.2 236.7 L895.4 223.1 L895.6 216.3 L895.8 224.7 L896.0 230.8 L896.2 229.7 L896.4 233.9 L896.5 224.2 L896.7 226.2 L896.9 245.5 L897.1 221.9 L897.3 237.8 L897.5 224.9 L897.7 217.8 L897.9 221.1 L898.1 224.4 L898.3 213.4 L898.4 207.5 L898.6 221.3 L898.8 216.3 L899.0 206.4 L899.2 215.4 L899.4 220.4 L899.6 218.6 L899.8 255.7 L899.9 229.9 L900.1 251.8 L900.3 236.7 L900.5 257.9 L900.7 240.3 L900.9 219.4 L901.0 222.7 L901.2 230.0 L901.4 213.9 L901.6 219.3 L901.8 228.2 L902.0 233.5 L902.1 222.0 L902.3 237.3 L902.5 218.5 L902.7 215.9 L902.9 212.2 L903.0 218.8 L903.2 220.7 L903.4 205.1 L903.6 207.5 L903.8 202.8 L903.9 207.7 L904.1 207.9 L904.3 206.3 L904.5 215.4 L904.7 212.7 L904.8 212.5 L905.0 213.4 L905.2 204.5 L905.4 243.3 L905.5 209.8 L905.7 212.0 L905.9 226.5 L906.1 215.4 L906.2 219.2 L906.4 202.4 L906.6 168.4 L906.8 154.4 L906.9 168.4 L907.1 202.4 L907.3 209.0 L907.4 216.2 L907.6 218.0 L907.8 204.1 L908.0 204.9 L908.1 236.0 L908.3 201.3 L908.5 206.6 L908.6 220.0 L908.8 215.3 L909.0 220.6 L909.2 227.8 L909.3 223.3 L909.5 231.0 L909.7 213.5 L909.8 207.5 L910.0 221.5 L910.2 223.2 L910.3 223.1 L910.5 222.2 L910.7 215.0 L910.8 210.5 L911.0 218.3 L911.2 222.4 L911.3 215.4 L911.5 207.8 L911.7 204.9 L911.8 212.4 L912.0 241.4 L912.2 252.7 L912.3 233.0 L912.5 227.1 L912.7 239.0 L912.8 233.7 L913.0 223.7 L913.2 236.4 L913.3 242.3 L913.5 266.3 L913.6 228.7 L913.8 214.7 L914.0 220.6 L914.1 249.6 L914.3 215.6 L914.5 214.4 L914.6 222.4 L914.8 249.6 L914.9 237.6 L915.1 216.0 L915.3 219.7 L915.4 225.2 L915.6 245.8 L915.7 218.1 L915.9 217.2 L916.1 217.8 L916.2 255.9 L916.4 218.9 L916.5 213.7 L916.7 210.5 L916.8 213.1 L917.0 218.7 L917.2 232.3 L917.3 225.4 L917.5 218.6 L917.6 217.8 L917.8 218.0 L917.9 216.8 L918.1 223.0 L918.3 229.9 L918.4 227.0 L918.6 222.4 L918.7 217.0 L918.9 218.0 L919.0 222.0 L919.2 215.5 L919.3 217.4 L919.5 211.0 L919.6 210.5 L919.8 240.4 L920.0 219.8 L920.1 220.9 L920.3 211.9 L920.4 210.7 L920.6 237.8 L920.7 206.8 L920.9 212.3 L921.0 223.0 L921.2 212.6 L921.3 218.3 L921.5 213.5 L921.6 216.8 L921.8 243.9 L921.9 231.0 L922.1 239.8 L922.2 227.9 L922.4 235.0 L922.5 205.3 L922.7 171.3 L922.8 157.3 L923.0 171.3 L923.1 205.3 L923.3 202.4 L923.4 210.0 L923.6 218.1 L923.7 201.8 L923.9 201.7 L924.0 212.4 L924.2 255.8 L924.3 212.9 L924.4 220.1 L924.6 216.2 L924.7 230.7 L924.9 225.6 L925.0 208.9 L925.2 212.3 L925.3 230.1 L925.5 242.7 L925.6 249.2 L925.8 218.2 L925.9 229.7 L926.0 257.2 L926.2 216.3 L926.3 207.6 L926.5 211.6 L926.6 215.3 L926.8 210.8 L926.9 218.2 L927.1 261.3 L927.2 247.5 L927.3 220.5 L927.5 207.8 L927.6 208.6 L927.8 214.6 L927.9 230.5 L928.1 216.6 L928.2 216.0 L928.3 244.2 L928.5 217.8 L928.6 217.8 L928.8 224.2 L928.9 245.7 L929.0 248.5 L929.2 236.3 L929.3 227.7 L929.5 251.0 L929.6 221.5 L929.7 215.8 L929.9 220.1 L930.0 227.9 L930.2 222.7 L930.3 242.9 L930.4 256.3 L930.6 244.2 L930.7 222.3 L930.8 212.3 L931.0 207.6 L931.1 210.3 L931.3 215.2 L931.4 218.1 L931.5 216.6 L931.7 245.7 L931.8 232.9 L931.9 225.9 L932.1 246.0 L932.2 217.3 L932.4 215.0 L932.5 214.5 L932.6 224.2 L932.8 246.3 L932.9 233.4 L933.0 230.4 L933.2 219.0 L933.3 223.2 L933.4 236.4 L933.6 238.7 L933.7 225.9 L933.8 217.2 L934.0 229.6 L934.1 221.0 L934.2 230.6 L934.4 205.8 L934.5 200.9 L934.6 223.2 L934.8 217.0 L934.9 215.2 L935.0 226.7 L935.2 211.6 L935.3 216.4 L935.4 231.6 L935.6 209.9 L935.7 205.7 L935.8 218.2 L936.0 259.7 L936.1 214.4 L936.2 212.7 L936.3 230.0 L936.5 209.9 L936.6 177.4 L936.7 163.4 L936.9 177.4 L937.0 201.0 L937.1 199.6 L937.3 203.1 L937.4 212.5 L937.5 238.3 L937.6 263.5 L937.8 266.1 L937.9 235.5 L938.0 221.9 L938.2 254.6 L938.3 214.1 L938.4 217.3 L938.5 214.8 L938.7 211.9 L938.8 217.6 L938.9 232.6 L939.1 213.1 L939.2 266.0 L939.3 214.4 L939.4 246.3 L939.6 233.8 L939.7 226.4 L939.8 238.0 L939.9 216.8 L940.1 211.3 L940.2 229.5 L940.3 247.9 L940.5 251.9 L940.6 233.5 L940.7 235.4 L940.8 244.0 L941.0 216.7 L941.1 210.8 L941.2 220.8 L941.3 216.1 L941.5 222.7 L941.6 266.0 L941.7 225.2 L941.8 221.7 L942.0 222.2 L942.1 229.1 L942.2 220.6 L942.3 215.7 L942.4 219.0 L942.6 242.2 L942.7 216.0 L942.8 213.7 L942.9 239.0 L943.1 222.6 L943.2 220.7 L943.3 228.7 L943.4 232.4 L943.5 232.8 L943.7 223.5 L943.8 215.9 L943.9 217.0 L944.0 233.0 L944.2 253.5 L944.3 235.8 L944.4 218.2 L944.5 221.8 L944.6 248.2 L944.8 217.1 L944.9 207.6 L945.0 209.7 L945.1 229.3 L945.2 222.8 L945.4 223.4 L945.5 224.2 L945.6 212.4 L945.7 213.3 L945.8 216.3 L946.0 238.9 L946.1 247.0 L946.2 260.7 L946.3 243.8 L946.4 218.1 L946.6 216.0 L946.7 224.8 L946.8 222.6 L946.9 219.0 L947.0 226.9 L947.1 237.3 L947.3 236.9 L947.4 216.7 L947.5 223.3 L947.6 239.9 L947.7 218.0 L947.9 242.7 L948.0 220.1 L948.1 232.9 L948.2 240.9 L948.3 229.1 L948.4 211.2 L948.6 198.6 L948.7 206.6 L948.8 214.7 L948.9 180.7 L949.0 166.7 L949.1 180.7 L949.2 214.7 L949.4 226.2 L949.5 212.0 L949.6 214.5 L949.7 226.8 L949.8 220.2 L949.9 223.5 L950.1 232.6 L950.2 214.1 L950.3 206.5 L950.4 213.0 L950.5 212.0 L950.6 212.5 L950.7 212.8 L950.9 213.1 L951.0 227.5 L951.1 246.5 L951.2 224.8 L951.3 234.6 L951.4 211.6 L951.5 217.6 L951.6 239.2 L951.8 233.2 L951.9 236.6 L952.0 240.4 L952.1 235.2 L952.2 232.5 L952.3 234.8 L952.4 263.3 L952.5 239.2 L952.7 225.8 L952.8 241.7 L952.9 232.3 L953.0 216.4 L953.1 223.2 L953.2 240.2 L953.3 227.2 L953.4 221.4 L953.6 247.3 L953.7 261.2 L953.8 222.2 L953.9 214.6 L954.0 216.4 L954.1 233.9 L954.2 223.0 L954.3 222.3 L954.4 236.3 L954.5 248.7 L954.7 243.4 L954.8 231.4 L954.9 252.0 L955.0 226.4 L955.1 238.3 L955.2 264.9 L955.3 222.2 L955.4 224.1 L955.5 266.2 L955.6 222.3 L955.7 220.1 L955.9 226.3 L956.0 224.3 L956.1 219.8 L956.2 228.5 L956.3 241.9 L956.4 235.7 L956.5 213.8 L956.6 208.4 L956.7 223.8 L956.8 237.8 L956.9 222.6 L957.0 219.5 L957.1 222.6 L957.3 219.7 L957.4 221.1 L957.5 226.0 L957.6 236.0 L957.7 243.7 L957.8 238.5 L957.9 242.9 L958.0 231.0 L958.1 228.9 L958.2 266.3 L958.3 227.5 L958.4 228.9 L958.5 223.6 L958.6 224.9 L958.7 224.9 L958.8 243.6 L959.0 240.1 L959.1 242.2 L959.2 243.2 L959.3 257.8 L959.4 239.9 L959.5 213.0 L959.6 214.4 L959.7 208.6 L959.8 220.8 L959.9 190.8 L960.0 176.8 L960.1 190.8 L960.2 220.7 L960.3 230.5 L960.4 219.8 L960.5 224.6 L960.6 238.3 L960.7 222.1 L960.8 199.0 L960.9 200.6 L961.0 224.2 L961.1 240.5 L961.2 216.9 L961.3 226.2 L961.4 203.4 L961.6 204.0 L961.7 214.3 L961.8 211.0 L961.9 211.4 L962.0 229.2 L962.1 214.7 L962.2 206.3 L962.3 221.3 L962.4 233.1 L962.5 239.3 L962.6 224.9 L962.7 217.5 L962.8 214.7 L962.9 248.4 L963.0 220.1 L963.1 227.7 L963.2 236.3 L963.3 221.5 L963.4 240.2 L963.5 228.8 L963.6 233.7 L963.7 258.9 L963.8 244.6 L963.9 231.0 L964.0 220.7 L964.1 230.0 L964.2 251.6 L964.3 238.3 L964.4 222.0 L964.5 231.1 L964.6 241.6 L964.7 245.7 L964.8 232.5 L964.9 231.0 L965.0 231.2 L965.1 226.1 L965.2 216.1 L965.3 221.9 L965.4 228.0 L965.5 226.2 L965.6 237.3 L965.7 231.8 L965.8 216.1 L965.9 209.0 L966.0 221.6 L966.1 213.9 L966.2 207.0 L966.3 215.5 L966.4 218.4 L966.5 222.5 L966.6 241.0 L966.7 238.6 L966.8 235.1 L966.9 239.7 L967.0 220.0 L967.1 208.4 L967.1 212.3 L967.2 234.0 L967.3 244.7 L967.4 237.6 L967.5 252.0 L967.6 215.2 L967.7 217.9 L967.8 225.1 L967.9 224.4 L968.0 223.6 L968.1 224.4 L968.2 262.6 L968.3 266.5 L968.4 245.5 L968.5 251.7 L968.6 255.2 L968.7 223.0 L968.8 222.0 L968.9 219.8 L969.0 232.3 L969.1 221.7 L969.2 217.1 L969.3 232.6 L969.4 221.0 L969.5 237.7 L969.6 230.7 L969.6 230.9 L969.7 231.5 L969.8 197.5 L969.9 183.5 L970.0 197.5 L970.1 231.5 L970.2 231.5 L970.3 253.4 L970.4 225.9 L970.5 219.1 L970.6 228.5 L970.7 242.3 L970.8 227.3 L970.9 226.7 L971.0 241.6 L971.1 228.9 L971.2 266.5 L971.3 266.5 L971.3 213.4 L971.4 211.1 L971.5 216.7 L971.6 209.8 L971.7 211.5 L971.8 217.2 L971.9 238.3 L972.0 232.0 L972.1 258.7 L972.2 216.1 L972.3 207.9 L972.4 216.9 L972.5 209.4 L972.6 227.0 L972.6 226.6 L972.7 238.6 L972.8 229.4 L972.9 221.1 L973.0 230.9 L973.1 240.1 L973.2 228.2 L973.3 211.0 L973.4 209.5 L973.5 217.2 L973.6 227.8 L973.7 227.3 L973.7 218.5 L973.8 243.3 L973.9 262.9 L974.0 215.9 L974.1 222.9 L974.2 233.5 L974.3 220.4 L974.4 218.3 L974.5 222.6 L974.6 227.0 L974.7 243.3 L974.7 236.4 L974.8 250.6 L974.9 235.0 L975.0 239.9 L975.1 218.1 L975.2 215.4 L975.3 214.2 L975.4 211.1 L975.5 214.7 L975.6 221.8 L975.6 219.2 L975.7 218.5 L975.8 221.4 L975.9 224.1 L976.0 240.5 L976.1 242.5 L976.2 216.7 L976.3 218.3 L976.4 225.7 L976.5 215.8 L976.5 214.1 L976.6 214.3 L976.7 214.0 L976.8 217.5 L976.9 239.7 L977.0 239.4 L977.1 223.7 L977.2 230.0 L977.3 266.7 L977.3 224.3 L977.4 218.5 L977.5 241.1 L977.6 216.3 L977.7 246.6 L977.8 209.7 L977.9 208.8 L978.0 266.7 L978.0 222.5 L978.1 226.7 L978.2 266.7 L978.3 223.4 L978.4 210.7 L978.5 210.7 L978.6 214.1 L978.7 232.0 L978.7 244.4 L978.8 212.3 L978.9 202.0 L979.0 188.0 L979.1 202.0 L979.2 211.7 L979.3 202.5 L979.4 224.4 L979.4 266.7 L979.5 264.2 L979.6 247.9 L979.7 215.4 L979.8 222.7 L979.9 210.9 L980.0 207.3 L980.0 221.0 L980.1 221.8 L980.2 225.7 L980.3 252.1 L980.4 221.3 L980.5 243.9 L980.6 222.9 L980.6 207.6 L980.7 216.2 L980.8 253.0 L980.9 237.7 L981.0 220.2 L981.1 219.7 L981.2 219.0 L981.2 228.8 L981.3 255.6 L981.4 230.2 L981.5 223.4 L981.6 238.8 L981.7 213.0 L981.7 230.4 L981.8 216.4 L981.9 216.2 L982.0 223.6 L982.1 234.8 L982.2 259.9 L982.3 233.7 L982.3 231.8 L982.4 224.3 L982.5 233.3 L982.6 229.6 L982.7 221.9 L982.8 241.6 L982.8 225.6 L982.9 232.6 L983.0 266.8 L983.1 247.9 L983.2 236.2 L983.3 227.3 L983.3 219.7 L983.4 240.9 L983.5 255.3 L983.6 218.9 L983.7 225.3 L983.8 215.0 L983.8 230.6 L983.9 241.6 L984.0 233.0 L984.1 220.8 L984.2 220.9 L984.3 226.2 L984.3 228.7 L984.4 243.2 L984.5 249.4 L984.6 241.7 L984.7 224.6 L984.7 222.8 L984.8 221.0 L984.9 242.0 L985.0 244.6 L985.1 258.1 L985.2 266.8 L985.2 235.0 L985.3 227.1 L985.4 227.8 L985.5 233.6 L985.6 238.3 L985.6 214.8 L985.7 207.8 L985.8 209.4 L985.9 210.2 L986.0 231.0 L986.1 262.2 L986.1 227.3 L986.2 207.0 L986.3 210.6 L986.4 227.7 L986.5 241.0 L986.5 240.3 L986.6 234.7 L986.7 217.0 L986.8 213.7 L986.9 229.7 L986.9 215.3 L987.0 227.0 L987.1 237.8 L987.2 221.1 L987.3 201.9 L987.3 201.0 L987.4 215.0 L987.5 224.8 L987.6 205.6 L987.7 218.0 L987.7 239.3 L987.8 223.6 L987.9 216.8 L988.0 220.1 L988.1 218.8 L988.1 209.0 L988.2 209.9 L988.3 234.5 L988.4 221.9 L988.5 241.5 L988.5 228.6 L988.6 216.6 L988.7 251.3 L988.8 213.2 L988.9 217.5 L988.9 235.9 L989.0 221.6 L989.1 216.8 L989.2 218.2 L989.3 238.4 L989.3 226.5 L989.4 220.3 L989.5 226.3 L989.6 260.0 L989.6 228.9 L989.7 237.2 L989.8 227.0 L989.9 214.6 L990.0 234.6 L990.0 216.8 L990.1 213.3 L990.2 216.3 L990.3 236.0 L990.3 232.8 L990.4 219.2 L990.5 213.2 L990.6 219.8 L990.7 236.3 L990.7 247.1 L990.8 227.6 L990.9 229.3 L991.0 211.2 L991.0 228.3 L991.1 240.1 L991.2 236.1 L991.3 231.2 L991.4 259.6 L991.4 226.5 L991.5 222.7 L991.6 230.9 L991.7 231.0 L991.7 213.6 L991.8 212.7 L991.9 214.5 L992.0 228.8 L992.0 211.0 L992.1 206.5 L992.2 210.7 L992.3 219.9 L992.4 219.5 L992.4 234.7 L992.5 220.1 L992.6 220.1 L992.7 223.5 L992.7 233.0 L992.8 233.6 L992.9 232.3 L993.0 208.1 L993.0 215.8 L993.1 251.8 L993.2 241.9 L993.3 258.9 L993.3 267.0 L993.4 220.0 L993.5 207.6 L993.6 218.6 L993.6 242.1 L993.7 244.6 L993.8 233.0 L993.9 249.3 L993.9 242.9 L994.0 221.8 L994.1 231.9 L994.2 267.1 L994.2 217.1 L994.3 212.1 L994.4 239.8 L994.5 243.3 L994.5 216.0 L994.6 226.5 L994.7 216.0 L994.8 217.8 L994.8 222.6 L994.9 217.4 L995.0 214.0 L995.1 200.0 L995.1 214.0 L995.2 248.0 L995.3 228.0 L995.4 233.3 L995.4 222.8 L995.5 211.2 L995.6 223.2 L995.7 233.4 L995.7 233.5 L995.8 234.2 L995.9 218.8 L996.0 222.7 L996.0 215.7 L996.1 217.6 L996.2 232.1 L996.3 232.7 L996.3 227.3 L996.4 216.4 L996.5 214.0 L996.5 213.5 L996.6 216.9 L996.7 231.6 L996.8 229.4 L996.8 238.0 L996.9 219.6 L997.0 223.5 L997.1 234.7 L997.1 220.4 L997.2 244.8 L997.3 234.7 L997.4 221.8 L997.4 219.4 L997.5 225.5 L997.6 219.1 L997.6 224.9 L997.7 224.3 L997.8 207.5 L997.9 209.4 L997.9 217.4 L998.0 223.4 L998.1 222.8 L998.2 226.3 L998.2 253.5 L998.3 247.3 L998.4 223.4 L998.4 223.8 L998.5 257.3 L998.6 242.4 L998.7 235.5 L998.7 218.7 L998.8 215.7 L998.9 234.4 L998.9 269.0 L999.0 243.9 L999.1 224.7 L999.2 219.1 L999.2 220.0 L999.3 224.7 L999.4 235.3 L999.4 259.5 L999.5 225.6 L999.6 243.5 L999.7 269.3 L999.7 254.0 L999.8 237.3 L999.9 219.4 L999.9 219.8 L1000.0 225.7 L1000.1 223.8 L1000.2 218.0 L1000.2 213.1 L1000.3 221.5 L1000.4 233.9 L1000.4 244.8 L1000.5 235.7 L1000.6 229.7 L1000.7 234.4 L1000.7 239.8 L1000.8 232.5 L1000.9 242.1 L1000.9 233.7 L1001.0 211.6 L1001.1 211.4 L1001.1 226.3 L1001.2 222.3 L1001.3 224.8 L1001.4 231.4 L1001.4 216.4 L1001.5 219.0 L1001.6 215.7 L1001.6 221.8 L1001.7 244.2 L1001.8 221.6 L1001.8 236.3 L1001.9 270.2 L1002.0 224.4 L1002.1 226.2 L1002.1 237.3 L1002.2 211.0 L1002.3 197.0 L1002.3 211.0 L1002.4 245.0 L1002.5 244.1 L1002.5 244.7 L1002.6 221.2 L1002.7 228.8 L1002.7 228.6 L1002.8 222.1 L1002.9 227.9 L1003.0 218.6 L1003.0 221.8 L1003.1 239.5 L1003.2 257.7 L1003.2 245.2 L1003.3 226.9 L1003.4 229.9 L1003.4 224.7 L1003.5 222.7 L1003.6 236.2 L1003.6 229.7 L1003.7 236.9 L1003.8 218.9 L1003.8 235.2 L1003.9 229.4 L1004.0 221.5 L1004.1 221.1 L1004.1 231.3 L1004.2 212.9 L1004.3 212.5 L1004.3 237.4 L1004.4 230.9 L1004.5 262.7 L1004.5 262.7 L1004.6 242.5 L1004.7 236.9 L1004.7 241.2 L1004.8 225.3 L1004.9 231.5 L1004.9 256.8 L1005.0 254.5 L1005.1 230.1 L1005.1 224.6 L1005.2 241.0 L1005.3 247.1 L1005.3 246.4 L1005.4 248.3 L1005.5 222.5 L1005.5 231.8 L1005.6 236.7 L1005.7 227.5 L1005.7 233.2 L1005.8 234.1 L1005.9 226.9 L1005.9 227.4 L1006.0 232.4 L1006.1 229.0 L1006.1 240.9 L1006.2 230.9 L1006.3 224.5 L1006.3 234.8 L1006.4 264.7 L1006.5 253.1 L1006.6 252.6 L1006.6 227.6 L1006.7 227.6 L1006.8 223.1 L1006.8 226.6 L1006.9 227.4 L1006.9 249.1 L1007.0 219.8 L1007.1 224.0 L1007.1 231.5 L1007.2 233.1 L1007.3 249.4 L1007.3 237.9 L1007.4 235.4 L1007.5 230.6 L1007.5 257.0 L1007.6 245.6 L1007.7 225.6 L1007.7 218.5 L1007.8 216.3 L1007.9 222.0 L1007.9 218.6 L1008.0 209.8 L1008.1 208.8 L1008.1 218.3 L1008.2 221.2 L1008.3 219.8 L1008.3 235.9 L1008.4 218.9 L1008.5 224.0 L1008.5 220.8 L1008.6 239.8 L1008.7 260.8 L1008.7 248.4 L1008.8 226.8 L1008.9 218.3 L1008.9 207.0 L1009.0 193.0 L1009.1 207.0 L1009.1 241.0 L1009.2 241.8 L1009.2 216.7 L1009.3 209.9 L1009.4 214.9 L1009.4 224.6 L1009.5 235.9 L1009.6 224.1 L1009.6 223.4 L1009.7 273.6 L1009.8 244.3 L1009.8 226.9 L1009.9 227.1 L1010.0 265.9 L1010.0 244.3 L1010.1 249.5 L1010.2 239.4 L1010.2 232.1 L1010.3 216.1 L1010.3 218.3 L1010.4 248.7 L1010.5 226.3 L1010.5 243.3 L1010.6 214.6 L1010.7 226.1 L1010.7 237.0 L1010.8 231.2 L1010.9 232.2 L1010.9 219.4 L1011.0 225.6 L1011.1 241.0 L1011.1 227.5 L1011.2 231.4 L1011.2 274.8 L1011.3 229.8 L1011.4 229.5 L1011.4 235.4 L1011.5 234.5 L1011.6 234.0 L1011.6 239.1 L1011.7 247.3 L1011.8 223.2 L1011.8 215.1 L1011.9 225.6 L1011.9 244.1 L1012.0 241.6 L1012.1 252.6 L1012.1 230.2 L1012.2 240.5 L1012.3 245.3 L1012.3 226.6 L1012.4 226.8 L1012.4 241.9 L1012.5 224.6 L1012.6 228.8 L1012.6 239.0 L1012.7 227.4 L1012.8 251.8 L1012.8 236.3 L1012.9 243.3 L1013.0 245.4 L1013.0 224.5 L1013.1 227.2 L1013.1 247.5 L1013.2 253.6 L1013.3 253.3 L1013.3 237.4 L1013.4 239.3 L1013.5 224.4 L1013.5 236.2 L1013.6 249.7 L1013.6 242.7 L1013.7 241.3 L1013.8 236.2 L1013.8 227.7 L1013.9 221.7 L1014.0 258.4 L1014.0 241.4 L1014.1 277.1 L1014.1 264.4 L1014.2 239.7 L1014.3 230.3 L1014.3 249.2 L1014.4 249.8 L1014.4 237.0 L1014.5 218.7 L1014.6 232.8 L1014.6 249.7 L1014.7 260.0 L1014.8 229.0 L1014.8 224.1 L1014.9 225.0 L1014.9 260.8 L1015.0 233.2 L1015.1 260.3 L1015.1 221.2 L1015.2 238.6 L1015.2 210.0 L1015.3 196.0 L1015.4 210.0 L1015.4 244.0 L1015.5 223.7 L1015.6 232.7 L1015.6 270.0 L1015.7 271.4 L1015.7 229.9 L1015.8 228.4 L1015.9 228.6 L1015.9 228.7 L1016.0 236.9 L1016.0 248.4 L1016.1 257.6 L1016.2 238.2 L1016.2 233.4 L1016.3 231.6 L1016.3 241.7 L1016.4 266.2 L1016.5 250.2 L1016.5 269.6 L1016.6 254.0 L1016.6 237.3 L1016.7 218.8 L1016.8 222.7 L1016.8 245.9 L1016.9 271.9 L1017.0 246.2 L1017.0 240.4 L1017.1 241.1 L1017.1 274.0 L1017.2 225.4 L1017.3 223.2 L1017.3 245.2 L1017.4 247.5 L1017.4 232.2 L1017.5 242.7 L1017.6 256.7 L1017.6 239.6 L1017.7 229.4 L1017.7 229.2 L1017.8 230.3 L1017.9 239.6 L1017.9 249.6 L1018.0 259.7 L1018.0 254.6 L1018.1 235.1 L1018.2 234.4 L1018.2 249.2 L1018.3 234.1 L1018.3 228.6 L1018.4 228.6 L1018.4 228.8 L1018.5 227.7 L1018.6 241.4 L1018.6 249.6 L1018.7 243.6 L1018.7 256.4 L1018.8 236.5 L1018.9 237.8 L1018.9 229.3 L1019.0 246.5 L1019.0 238.5 L1019.1 235.7 L1019.2 230.3 L1019.2 236.7 L1019.3 238.7 L1019.3 242.1 L1019.4 226.0 L1019.5 230.3 L1019.5 260.9 L1019.6 246.3 L1019.6 226.0 L1019.7 220.7 L1019.7 237.1 L1019.8 241.8 L1019.9 231.9 L1019.9 246.8 L1020.0 264.8 L1020.0 249.5 L1020.1 231.9 L1020.2 225.0 L1020.2 230.7 L1020.3 246.4 L1020.3 282.1 L1020.4 242.0 L1020.5 223.9 L1020.5 224.5 L1020.6 238.0 L1020.6 251.7 L1020.7 234.2 L1020.7 237.1 L1020.8 237.3 L1020.9 270.1 L1020.9 241.5 L1021.0 234.3 L1021.0 241.3 L1021.1 282.7 L1021.1 237.9 L1021.2 218.0 L1021.3 204.0 L1021.3 218.0 L1021.4 228.3 L1021.4 235.0 L1021.5 283.0 L1021.6 237.4 L1021.6 237.0 L1021.7 236.1 L1021.7 260.6 L1021.8 257.6 L1021.8 231.5 L1021.9 250.1 L1022.0 253.5 L1022.0 271.7 L1022.1 232.8 L1022.1 226.0 L1022.2 255.8 L1022.2 228.2 L1022.3 223.1 L1022.4 250.8 L1022.4 259.4 L1022.5 263.9 L1022.5 240.1 L1022.6 247.6 L1022.6 257.1 L1022.7 247.3 L1022.8 255.9 L1022.8 263.2 L1022.9 251.3 L1022.9 249.7 L1023.0 261.6 L1023.0 248.5 L1023.1 238.2 L1023.2 260.3 L1023.2 243.4 L1023.3 244.4 L1023.3 242.9 L1023.4 228.0 L1023.4 235.3 L1023.5 233.6 L1023.6 235.1 L1023.6 264.5 L1023.7 247.1 L1023.7 247.2 L1023.8 248.3 L1023.8 250.1 L1023.9 241.2 L1024.0 248.0 L1024.0 241.5 L1024.1 239.0 L1024.1 271.4 L1024.2 237.8 L1024.2 239.1 L1024.3 276.7 L1024.3 258.6 L1024.4 247.5 L1024.5 246.5 L1024.5 271.9 L1024.6 242.6 L1024.6 258.7 L1024.7 285.5 L1024.7 260.1 L1024.8 242.5 L1024.9 243.9 L1024.9 250.9 L1025.0 237.3 L1025.0 240.2 L1025.1 259.6 L1025.1 252.5 L1025.2 254.7 L1025.2 244.3 L1025.3 238.4 L1025.4 262.4 L1025.4 264.0 L1025.5 264.3 L1025.5 254.8 L1025.6 251.8 L1025.6 242.9 L1025.7 238.3 L1025.7 251.9 L1025.8 273.0 L1025.9 257.8 L1025.9 244.0 L1026.0 236.2 L1026.0 252.5 L1026.1 238.8 L1026.1 242.0 L1026.2 249.5 L1026.2 260.4 L1026.3 230.6 L1026.4 230.6 L1026.4 230.7 L1026.5 224.7 L1026.5 221.2 L1026.6 226.7 L1026.6 237.0 L1026.7 250.8 L1026.7 258.6 L1026.8 257.0 L1026.8 223.0 L1026.9 209.0 L1027.0 223.0 L1027.0 257.0 L1027.1 260.6 L1027.1 289.0 L1027.2 280.6 L1027.2 252.2 L1027.3 231.6 L1027.3 234.9 L1027.4 232.5 L1027.4 238.3 L1027.5 238.5 L1027.6 248.7 L1027.6 269.0 L1027.7 256.7 L1027.7 244.2 L1027.8 232.8 L1027.8 231.3 L1027.9 257.5 L1027.9 243.3 L1028.0 260.9 L1028.0 266.8 L1028.1 254.1 L1028.2 246.8 L1028.2 272.0 L1028.3 248.8 L1028.3 251.3 L1028.4 247.0 L1028.4 239.8 L1028.5 244.9 L1028.5 242.3 L1028.6 243.4 L1028.6 267.1 L1028.7 258.1 L1028.7 261.1 L1028.8 258.7 L1028.9 237.7 L1028.9 230.3 L1029.0 241.3 L1029.0 254.6 L1029.1 235.5 L1029.1 242.6 L1029.2 260.0 L1029.2 250.9 L1029.3 238.4 L1029.3 249.7 L1029.4 254.7 L1029.4 252.6 L1029.5 251.7 L1029.6 245.0 L1029.6 239.1 L1029.7 249.5 L1029.7 265.4 L1029.8 263.1 L1029.8 263.3 L1029.9 249.4 L1029.9 243.8 L1030.0 235.6 L1030.0 240.5 L1030.1 237.8 L1030.1 254.3 L1030.2 291.7 L1030.2 250.4 L1030.3 240.8 L1030.4 239.9 L1030.4 247.2 L1030.5 277.8 L1030.5 273.4 L1030.6 267.2 L1030.6 259.0 L1030.7 238.8 L1030.7 237.6 L1030.8 293.6 L1030.8 241.2 L1030.9 241.5 L1030.9 245.2 L1031.0 252.7 L1031.0 258.9 L1031.1 270.2 L1031.1 240.2 L1031.2 248.6 L1031.3 241.2 L1031.3 242.3 L1031.4 252.8 L1031.4 250.8 L1031.5 266.6 L1031.5 249.4 L1031.6 294.6 L1031.6 264.3 L1031.7 242.4 L1031.7 235.4 L1031.8 237.7 L1031.8 269.0 L1031.9 245.6 L1031.9 246.6 L1032.0 278.9 L1032.0 295.2 L1032.1 273.4 L1032.1 261.1 L1032.2 232.0 L1032.2 218.0 L1032.3 232.0 L1032.4 264.3 L1032.4 254.2 L1032.5 234.6 L1032.5 242.4 L1032.6 244.6 L1032.6 227.6 L1032.7 232.2 L1032.7 236.4 L1032.8 244.3 L1032.8 276.4 L1032.9 245.1 L1032.9 246.1 L1033.0 260.7 L1033.0 271.2 L1033.1 292.3 L1033.1 264.6 L1033.2 261.6 L1033.2 255.1 L1033.3 260.6 L1033.3 269.1 L1033.4 255.7 L1033.4 258.7 L1033.5 260.0 L1033.5 255.2 L1033.6 261.6 L1033.6 250.8 L1033.7 243.7 L1033.7 255.7 L1033.8 269.2 L1033.9 241.1 L1033.9 240.4 L1034.0 252.6 L1034.0 245.2 L1034.1 246.1 L1034.1 259.5 L1034.2 263.0 L1034.2 242.5 L1034.3 240.9 L1034.3 247.3 L1034.4 270.5 L1034.4 260.4 L1034.5 259.9" fill="none" stroke="#34fa34" stroke-width="1" shape-rendering="crispEdges"/></svg><div style="position:absolute;left:14px;top:459px;width:42px;height:394px;overflow:hidden"><div class="lbl" style="left:0px;top:-6px;width:38px;color:#e4e4e4;font-size:9.5px;line-height:10px;letter-spacing:-0.6px">0.0</div><div class="lbl" style="left:0px;top:8px;width:38px;color:#e4e4e4;font-size:9.5px;line-height:10px;letter-spacing:-0.6px">-6.0</div><div class="lbl" style="left:0px;top:23px;width:38px;color:#e4e4e4;font-size:9.5px;line-height:10px;letter-spacing:-0.6px">-12.0</div><div class="lbl" style="left:0px;top:37px;width:38px;color:#e4e4e4;font-size:9.5px;line-height:10px;letter-spacing:-0.6px">-18.0</div><div class="lbl" style="left:0px;top:51px;width:38px;color:#e4e4e4;font-size:9.5px;line-height:10px;letter-spacing:-0.6px">-24.0</div><div class="lbl" style="left:0px;top:66px;width:38px;color:#e4e4e4;font-size:9.5px;line-height:10px;letter-spacing:-0.6px">-30.0</div><div class="lbl" style="left:0px;top:80px;width:38px;color:#e4e4e4;font-size:9.5px;line-height:10px;letter-spacing:-0.6px">-36.0</div><div class="lbl" style="left:0px;top:95px;width:38px;color:#e4e4e4;font-size:9.5px;line-height:10px;letter-spacing:-0.6px">-42.0</div><div class="lbl" style="left:0px;top:109px;width:38px;color:#e4e4e4;font-size:9.5px;line-height:10px;letter-spacing:-0.6px">-48.0</div><div class="lbl" style="left:0px;top:123px;width:38px;color:#e4e4e4;font-size:9.5px;line-height:10px;letter-spacing:-0.6px">-54.0</div><div class="lbl" style="left:0px;top:138px;width:38px;color:#e4e4e4;font-size:9.5px;line-height:10px;letter-spacing:-0.6px">-60.0</div><div class="lbl" style="left:0px;top:152px;width:38px;color:#e4e4e4;font-size:9.5px;line-height:10px;letter-spacing:-0.6px">-66.0</div><div class="lbl" style="left:0px;top:167px;width:38px;color:#e4e4e4;font-size:9.5px;line-height:10px;letter-spacing:-0.6px">-72.0</div><div class="lbl" style="left:0px;top:181px;width:38px;color:#e4e4e4;font-size:9.5px;line-height:10px;letter-spacing:-0.6px">-78.0</div><div class="lbl" style="left:0px;top:195px;width:38px;color:#e4e4e4;font-size:9.5px;line-height:10px;letter-spacing:-0.6px">-84.0</div><div class="lbl" style="left:0px;top:210px;width:38px;color:#e4e4e4;font-size:9.5px;line-height:10px;letter-spacing:-0.6px">-90.0</div><div class="lbl" style="left:0px;top:224px;width:38px;color:#e4e4e4;font-size:9.5px;line-height:10px;letter-spacing:-0.6px">-96.0</div><div class="lbl" style="left:0px;top:239px;width:38px;color:#e4e4e4;font-size:9.5px;line-height:10px;letter-spacing:-0.6px">-102.0</div><div class="lbl" style="left:0px;top:253px;width:38px;color:#e4e4e4;font-size:9.5px;line-height:10px;letter-spacing:-0.6px">-108.0</div><div class="lbl" style="left:0px;top:267px;width:38px;color:#e4e4e4;font-size:9.5px;line-height:10px;letter-spacing:-0.6px">-114.0</div><div class="lbl" style="left:0px;top:282px;width:38px;color:#e4e4e4;font-size:9.5px;line-height:10px;letter-spacing:-0.6px">-120.0</div><div class="lbl" style="left:0px;top:296px;width:38px;color:#e4e4e4;font-size:9.5px;line-height:10px;letter-spacing:-0.6px">-126.0</div><div class="lbl" style="left:0px;top:310px;width:38px;color:#e4e4e4;font-size:9.5px;line-height:10px;letter-spacing:-0.6px">-132.0</div><div class="lbl" style="left:0px;top:325px;width:38px;color:#e4e4e4;font-size:9.5px;line-height:10px;letter-spacing:-0.6px">-138.0</div><div class="lbl" style="left:0px;top:339px;width:38px;color:#e4e4e4;font-size:9.5px;line-height:10px;letter-spacing:-0.6px">-144.0</div><div class="lbl" style="left:0px;top:354px;width:38px;color:#e4e4e4;font-size:9.5px;line-height:10px;letter-spacing:-0.6px">-150.0</div><div class="lbl" style="left:0px;top:368px;width:38px;color:#e4e4e4;font-size:9.5px;line-height:10px;letter-spacing:-0.6px">-156.0</div><div class="lbl" style="left:0px;top:382px;width:38px;color:#e4e4e4;font-size:9.5px;line-height:10px;letter-spacing:-0.6px">-162.0</div></div><div style="position:absolute;left:1091px;top:459px;width:42px;height:394px;overflow:hidden"><div class="lbl" style="left:2px;top:-6px;width:38px;text-align:left;color:#000;font-size:9.5px;line-height:10px;letter-spacing:-0.6px">&nbsp;0.0</div><div class="lbl" style="left:2px;top:8px;width:38px;text-align:left;color:#000;font-size:9.5px;line-height:10px;letter-spacing:-0.6px">-6.0</div><div class="lbl" style="left:2px;top:23px;width:38px;text-align:left;color:#000;font-size:9.5px;line-height:10px;letter-spacing:-0.6px">-12.0</div><div class="lbl" style="left:2px;top:37px;width:38px;text-align:left;color:#000;font-size:9.5px;line-height:10px;letter-spacing:-0.6px">-18.0</div><div class="lbl" style="left:2px;top:51px;width:38px;text-align:left;color:#000;font-size:9.5px;line-height:10px;letter-spacing:-0.6px">-24.0</div><div class="lbl" style="left:2px;top:66px;width:38px;text-align:left;color:#000;font-size:9.5px;line-height:10px;letter-spacing:-0.6px">-30.0</div><div class="lbl" style="left:2px;top:80px;width:38px;text-align:left;color:#000;font-size:9.5px;line-height:10px;letter-spacing:-0.6px">-36.0</div><div class="lbl" style="left:2px;top:95px;width:38px;text-align:left;color:#000;font-size:9.5px;line-height:10px;letter-spacing:-0.6px">-42.0</div><div class="lbl" style="left:2px;top:109px;width:38px;text-align:left;color:#000;font-size:9.5px;line-height:10px;letter-spacing:-0.6px">-48.0</div><div class="lbl" style="left:2px;top:123px;width:38px;text-align:left;color:#000;font-size:9.5px;line-height:10px;letter-spacing:-0.6px">-54.0</div><div class="lbl" style="left:2px;top:138px;width:38px;text-align:left;color:#000;font-size:9.5px;line-height:10px;letter-spacing:-0.6px">-60.0</div><div class="lbl" style="left:2px;top:152px;width:38px;text-align:left;color:#000;font-size:9.5px;line-height:10px;letter-spacing:-0.6px">-66.0</div><div class="lbl" style="left:2px;top:167px;width:38px;text-align:left;color:#000;font-size:9.5px;line-height:10px;letter-spacing:-0.6px">-72.0</div><div class="lbl" style="left:2px;top:181px;width:38px;text-align:left;color:#000;font-size:9.5px;line-height:10px;letter-spacing:-0.6px">-78.0</div><div class="lbl" style="left:2px;top:195px;width:38px;text-align:left;color:#000;font-size:9.5px;line-height:10px;letter-spacing:-0.6px">-84.0</div><div class="lbl" style="left:2px;top:210px;width:38px;text-align:left;color:#000;font-size:9.5px;line-height:10px;letter-spacing:-0.6px">-90.0</div><div class="lbl" style="left:2px;top:224px;width:38px;text-align:left;color:#000;font-size:9.5px;line-height:10px;letter-spacing:-0.6px">-96.0</div><div class="lbl" style="left:2px;top:239px;width:38px;text-align:left;color:#000;font-size:9.5px;line-height:10px;letter-spacing:-0.6px">-102.0</div><div class="lbl" style="left:2px;top:253px;width:38px;text-align:left;color:#000;font-size:9.5px;line-height:10px;letter-spacing:-0.6px">-108.0</div><div class="lbl" style="left:2px;top:267px;width:38px;text-align:left;color:#000;font-size:9.5px;line-height:10px;letter-spacing:-0.6px">-114.0</div><div class="lbl" style="left:2px;top:282px;width:38px;text-align:left;color:#000;font-size:9.5px;line-height:10px;letter-spacing:-0.6px">-120.0</div><div class="lbl" style="left:2px;top:296px;width:38px;text-align:left;color:#000;font-size:9.5px;line-height:10px;letter-spacing:-0.6px">-126.0</div><div class="lbl" style="left:2px;top:310px;width:38px;text-align:left;color:#000;font-size:9.5px;line-height:10px;letter-spacing:-0.6px">-132.0</div><div class="lbl" style="left:2px;top:325px;width:38px;text-align:left;color:#000;font-size:9.5px;line-height:10px;letter-spacing:-0.6px">-138.0</div><div class="lbl" style="left:2px;top:339px;width:38px;text-align:left;color:#000;font-size:9.5px;line-height:10px;letter-spacing:-0.6px">-144.0</div><div class="lbl" style="left:2px;top:354px;width:38px;text-align:left;color:#000;font-size:9.5px;line-height:10px;letter-spacing:-0.6px">-150.0</div><div class="lbl" style="left:2px;top:368px;width:38px;text-align:left;color:#000;font-size:9.5px;line-height:10px;letter-spacing:-0.6px">-156.0</div><div class="lbl" style="left:2px;top:382px;width:38px;text-align:left;color:#000;font-size:9.5px;line-height:10px;letter-spacing:-0.6px">-162.0</div></div><div class="t" style="left:15px;top:460px;font-family:&quot;Liberation Serif&quot;,serif;font-weight:bold;font-size:10px;color:#0000e0;line-height:10px;letter-spacing:-0.3px">dBr</div><div class="t" style="left:1113px;top:460px;font-family:&quot;Liberation Serif&quot;,serif;font-weight:bold;font-size:10px;color:#0000e0;line-height:10px;letter-spacing:-0.3px">dBr</div><div class="t" style="left:1026px;top:467px;font-size:11px;color:#40d8d8;background:#000;padding:0 1px">0.00000</div><div class="t" style="left:98px;top:854px;width:60px;text-align:center;font-size:11px;color:#000">2</div><div class="t" style="left:141px;top:854px;width:60px;text-align:center;font-size:11px;color:#000">3</div><div class="t" style="left:170px;top:854px;width:60px;text-align:center;font-size:11px;color:#000">4</div><div class="t" style="left:194px;top:854px;width:60px;text-align:center;font-size:11px;color:#000">5</div><div class="t" style="left:213px;top:854px;width:60px;text-align:center;font-size:11px;color:#000">6</div><div class="t" style="left:229px;top:854px;width:60px;text-align:center;font-size:11px;color:#000">7</div><div class="t" style="left:243px;top:854px;width:60px;text-align:center;font-size:11px;color:#000">8</div><div class="t" style="left:266px;top:854px;width:60px;text-align:center;font-size:11px;color:#000"><b>10</b></div><div class="t" style="left:338px;top:854px;width:60px;text-align:center;font-size:11px;color:#000">20</div><div class="t" style="left:381px;top:854px;width:60px;text-align:center;font-size:11px;color:#000">30</div><div class="t" style="left:410px;top:854px;width:60px;text-align:center;font-size:11px;color:#000">40</div><div class="t" style="left:434px;top:854px;width:60px;text-align:center;font-size:11px;color:#000">50</div><div class="t" style="left:453px;top:854px;width:60px;text-align:center;font-size:11px;color:#000">60</div><div class="t" style="left:469px;top:854px;width:60px;text-align:center;font-size:11px;color:#000">70</div><div class="t" style="left:506px;top:854px;width:60px;text-align:center;font-size:11px;color:#000"><b>100</b></div><div class="t" style="left:578px;top:854px;width:60px;text-align:center;font-size:11px;color:#000">200</div><div class="t" style="left:621px;top:854px;width:60px;text-align:center;font-size:11px;color:#000">300</div><div class="t" style="left:650px;top:854px;width:60px;text-align:center;font-size:11px;color:#000">400</div><div class="t" style="left:674px;top:854px;width:60px;text-align:center;font-size:11px;color:#000">500</div><div class="t" style="left:709px;top:854px;width:60px;text-align:center;font-size:11px;color:#000">700</div><div class="t" style="left:746px;top:854px;width:60px;text-align:center;font-size:11px;color:#000"><b>1k</b></div><div class="t" style="left:818px;top:854px;width:60px;text-align:center;font-size:11px;color:#000">2k</div><div class="t" style="left:861px;top:854px;width:60px;text-align:center;font-size:11px;color:#000">3k</div><div class="t" style="left:890px;top:854px;width:60px;text-align:center;font-size:11px;color:#000">4k</div><div class="t" style="left:914px;top:854px;width:60px;text-align:center;font-size:11px;color:#000">5k</div><div class="t" style="left:933px;top:854px;width:60px;text-align:center;font-size:11px;color:#000">6k</div><div class="t" style="left:949px;top:854px;width:60px;text-align:center;font-size:11px;color:#000">7k</div><div class="t" style="left:986px;top:854px;width:60px;text-align:center;font-size:11px;color:#000"><b>10k</b></div><div class="t" style="left:1058px;top:854px;width:60px;text-align:center;font-size:11px;color:#000">20k</div><div class="t" style="left:1117px;top:854px;font-weight:bold;font-size:11px;color:#0000e0">Hz</div><div style="position:absolute;left:1139px;top:476px;width:213px;height:326px;border:1px solid #898c95;background:#fff"></div><div style="position:absolute;left:1184px;top:458px;width:39px;height:17px;border:1px solid #898c95;border-bottom:none;border-radius:2px 2px 0 0;background:linear-gradient(#f2f2f2,#ebebeb 50%,#dddddd 50%,#cfcfcf);text-align:center;line-height:18px">More</div><div style="position:absolute;left:1225px;top:458px;width:40px;height:17px;border:1px solid #898c95;border-bottom:none;border-radius:2px 2px 0 0;background:linear-gradient(#f2f2f2,#ebebeb 50%,#dddddd 50%,#cfcfcf);text-align:center;line-height:18px">Cepst</div><div style="position:absolute;left:1267px;top:458px;width:40px;height:17px;border:1px solid #898c95;border-bottom:none;border-radius:2px 2px 0 0;background:linear-gradient(#f2f2f2,#ebebeb 50%,#dddddd 50%,#cfcfcf);text-align:center;line-height:18px">THD</div><div style="position:absolute;left:1309px;top:458px;width:41px;height:17px;border:1px solid #898c95;border-bottom:none;border-radius:2px 2px 0 0;background:linear-gradient(#f2f2f2,#ebebeb 50%,#dddddd 50%,#cfcfcf);text-align:center;line-height:18px">Uncert</div><div style="position:absolute;left:1139px;top:456px;width:44px;height:21px;border:1px solid #898c95;border-bottom:none;border-radius:2px 2px 0 0;background:#fff;line-height:20px;text-align:center">Main</div><div class="grp" style="left:1144px;top:481px;width:109px;height:145px"></div><div class="cb" style="left:1151px;top:485px"></div><div class="t" style="left:1168px;top:485px;">Stay on top</div><div class="cb" style="left:1151px;top:501px"></div><div class="t" style="left:1168px;top:501px;">Volt meter</div><div class="cb" style="left:1151px;top:517px"></div><div class="t" style="left:1168px;top:517px;">Freq. meter</div><div class="cb" style="left:1151px;top:533px"></div><div class="t" style="left:1168px;top:533px;">Wave Gen./Rec</div><div class="cb" style="left:1151px;top:549px"></div><div class="t" style="left:1168px;top:549px;">Phase</div><div class="cb" style="left:1151px;top:565px"></div><div class="t" style="left:1168px;top:565px;">THD view</div><div class="cb" style="left:1151px;top:581px"></div><div class="t" style="left:1168px;top:581px;">THD+Noise view</div><div class="cb" style="left:1151px;top:597px"></div><div class="t" style="left:1168px;top:597px;">ZRLC meter</div><div class="cb" style="left:1151px;top:613px"></div><div class="t" style="left:1168px;top:613px;">Fast Rec./Play</div><div class="btn" style="left:1264px;top:487px;width:85px;height:12px;line-height:12px;"><span style="">Capture scope</span></div><div class="btn" style="left:1264px;top:505px;width:85px;height:13px;line-height:13px;"><span style="letter-spacing:-0.3px">Capture spectrum</span></div><div class="btn" style="left:1263px;top:524px;width:55px;height:12px;line-height:12px;"><span style="">WaveOn</span></div><div class="btn" style="left:1324px;top:524px;width:25px;height:12px;line-height:12px;"><span style="">Info</span></div><div class="grp" style="left:1264px;top:545px;width:86px;height:81px"></div><div class="t" style="left:1281px;top:557px;">wait</div><div class="edit" style="left:1311px;top:554px;width:32px;height:20px;line-height:18px;color:#000;">94</div><div class="t" style="left:1281px;top:580px;">req.</div><div class="edit" style="left:1311px;top:577px;width:32px;height:20px;line-height:18px;color:#000;">-7</div><div class="t" style="left:1281px;top:603px;">used</div><div class="edit" style="left:1311px;top:600px;width:32px;height:20px;line-height:18px;color:#000;">0</div><div class="grp" style="left:1144px;top:637px;width:110px;height:149px"></div><div class="t glab" style="left:1150px;top:630px;background:#fff">Y - axis</div><div style="position:absolute;left:1164px;top:652px;width:6px;height:106px;border:1px solid #c4c4c4;background:#e4e4e4"></div><div style="position:absolute;left:1157px;top:655px;width:2px;height:1px;background:#a0a0a0"></div><div style="position:absolute;left:1178px;top:655px;width:2px;height:1px;background:#a0a0a0"></div><div style="position:absolute;left:1157px;top:669px;width:2px;height:1px;background:#a0a0a0"></div><div style="position:absolute;left:1178px;top:669px;width:2px;height:1px;background:#a0a0a0"></div><div style="position:absolute;left:1157px;top:682px;width:2px;height:1px;background:#a0a0a0"></div><div style="position:absolute;left:1178px;top:682px;width:2px;height:1px;background:#a0a0a0"></div><div style="position:absolute;left:1157px;top:696px;width:2px;height:1px;background:#a0a0a0"></div><div style="position:absolute;left:1178px;top:696px;width:2px;height:1px;background:#a0a0a0"></div><div style="position:absolute;left:1157px;top:710px;width:2px;height:1px;background:#a0a0a0"></div><div style="position:absolute;left:1178px;top:710px;width:2px;height:1px;background:#a0a0a0"></div><div style="position:absolute;left:1157px;top:723px;width:2px;height:1px;background:#a0a0a0"></div><div style="position:absolute;left:1178px;top:723px;width:2px;height:1px;background:#a0a0a0"></div><div style="position:absolute;left:1157px;top:737px;width:2px;height:1px;background:#a0a0a0"></div><div style="position:absolute;left:1178px;top:737px;width:2px;height:1px;background:#a0a0a0"></div><div style="position:absolute;left:1157px;top:751px;width:2px;height:1px;background:#a0a0a0"></div><div style="position:absolute;left:1178px;top:751px;width:2px;height:1px;background:#a0a0a0"></div><div style="position:absolute;left:1157px;top:757px;width:2px;height:1px;background:#a0a0a0"></div><div style="position:absolute;left:1178px;top:757px;width:2px;height:1px;background:#a0a0a0"></div><div style="position:absolute;left:1161px;top:667px;width:12px;height:5px;border:1px solid #808080;border-radius:2px;background:linear-gradient(#f8f8f8,#d8d8d8)"></div><div class="btn" style="left:1152px;top:769px;width:29px;height:11px;line-height:11px;"><span style="">Auto</span></div><div class="cb" style="left:1199px;top:643px"><svg width="11" height="11" style="position:absolute;left:0;top:0"><path d="M2.5 5.5 L4.5 8.5 L8.8 1.8" stroke="#3d4a9c" stroke-width="1.6" fill="none"/></svg></div><div class="t" style="left:1216px;top:643px;">Log</div><div class="cb" style="left:1199px;top:662px"></div><div class="t" style="left:1216px;top:662px;">Hold</div><div class="cb dis" style="left:1199px;top:680px"><svg width="11" height="11" style="position:absolute;left:0;top:0"><path d="M2.5 5.5 L4.5 8.5 L8.8 1.8" stroke="#b8b8b8" stroke-width="1.6" fill="none"/></svg></div><div class="t" style="left:1216px;top:680px;color:#a0a0a0;">Lines</div><div class="cb" style="left:1199px;top:698px"></div><div class="t" style="left:1216px;top:698px;">Info</div><div class="t" style="left:1191px;top:713px;">Average</div><div class="combo" style="left:1191px;top:726px;width:57px;height:21px;line-height:19px;color:#000"><div style="position:absolute;left:4px;top:0;width:35px;overflow:hidden;white-space:nowrap">1</div><svg width="9" height="5" style="position:absolute;right:7px;top:7px"><path d="M0 0 L9 0 L4.5 5Z" fill="#000"/></svg></div><div class="t" style="left:1191px;top:748px;">Step</div><div class="combo" style="left:1191px;top:762px;width:57px;height:21px;line-height:19px;color:#000"><div style="position:absolute;left:4px;top:0;width:35px;overflow:hidden;white-space:nowrap">6 dB</div><svg width="9" height="5" style="position:absolute;right:7px;top:7px"><path d="M0 0 L9 0 L4.5 5Z" fill="#000"/></svg></div><div class="grp" style="left:1264px;top:637px;width:86px;height:96px"></div><div class="t glab" style="left:1270px;top:630px;background:#fff">X - axis</div><div class="cb" style="left:1271px;top:647px"><svg width="11" height="11" style="position:absolute;left:0;top:0"><path d="M2.5 5.5 L4.5 8.5 L8.8 1.8" stroke="#3d4a9c" stroke-width="1.6" fill="none"/></svg></div><div class="t" style="left:1288px;top:647px;">Log</div><div class="cb" style="left:1316px;top:647px"></div><div class="t" style="left:1333px;top:647px;">3D</div><div class="cb dis" style="left:1271px;top:665px"></div><div class="t" style="left:1288px;top:665px;color:#a0a0a0;">true X</div><div class="combo" style="left:1271px;top:680px;width:74px;height:20px;line-height:18px;color:#000"><div style="position:absolute;left:4px;top:0;width:52px;overflow:hidden;white-space:nowrap"><span style="font-size:10.5px">Fit screen</span></div><svg width="9" height="5" style="position:absolute;right:7px;top:6px"><path d="M0 0 L9 0 L4.5 5Z" fill="#000"/></svg></div><div class="combo dis" style="left:1271px;top:706px;width:74px;height:21px;line-height:19px;color:#9a9a9a"><div style="position:absolute;left:4px;top:0;width:52px;overflow:hidden;white-space:nowrap">1/1</div><svg width="9" height="5" style="position:absolute;right:7px;top:7px"><path d="M0 0 L9 0 L4.5 5Z" fill="#b8b8b8"/></svg></div><div class="grp" style="left:1264px;top:746px;width:86px;height:38px"></div><div class="t glab" style="left:1270px;top:739px;background:#fff">Channel(s)</div><div class="combo" style="left:1271px;top:759px;width:74px;height:20px;line-height:18px;color:#000"><div style="position:absolute;left:4px;top:0;width:52px;overflow:hidden;white-space:nowrap">A</div><svg width="9" height="5" style="position:absolute;right:7px;top:6px"><path d="M0 0 L9 0 L4.5 5Z" fill="#000"/></svg></div><div style="position:absolute;left:6px;top:873px;width:1351px;height:1px;background:#a0a0a0"></div><div class="t" style="left:9px;top:876px;font-style:italic;font-size:10.7px;color:#202020">[Points = 4096]&nbsp; [Sampling = 40960Hz]&nbsp; [Smoothing = Hanning]&nbsp; [Ini = C:\Program Files (x86)\Visual Analyser\VA.ini]&nbsp; [UID = FAD6460EB5519212C7A28263A8623EC6]</div><svg style="position:absolute;left:1344px;top:878px" width="12" height="12"><rect x="9" y="1" width="1" height="1" fill="#a0a0a0"/><rect x="9" y="5" width="1" height="1" fill="#a0a0a0"/><rect x="5" y="5" width="1" height="1" fill="#a0a0a0"/><rect x="9" y="9" width="1" height="1" fill="#a0a0a0"/><rect x="5" y="9" width="1" height="1" fill="#a0a0a0"/><rect x="1" y="9" width="1" height="1" fill="#a0a0a0"/></svg></body></html>
